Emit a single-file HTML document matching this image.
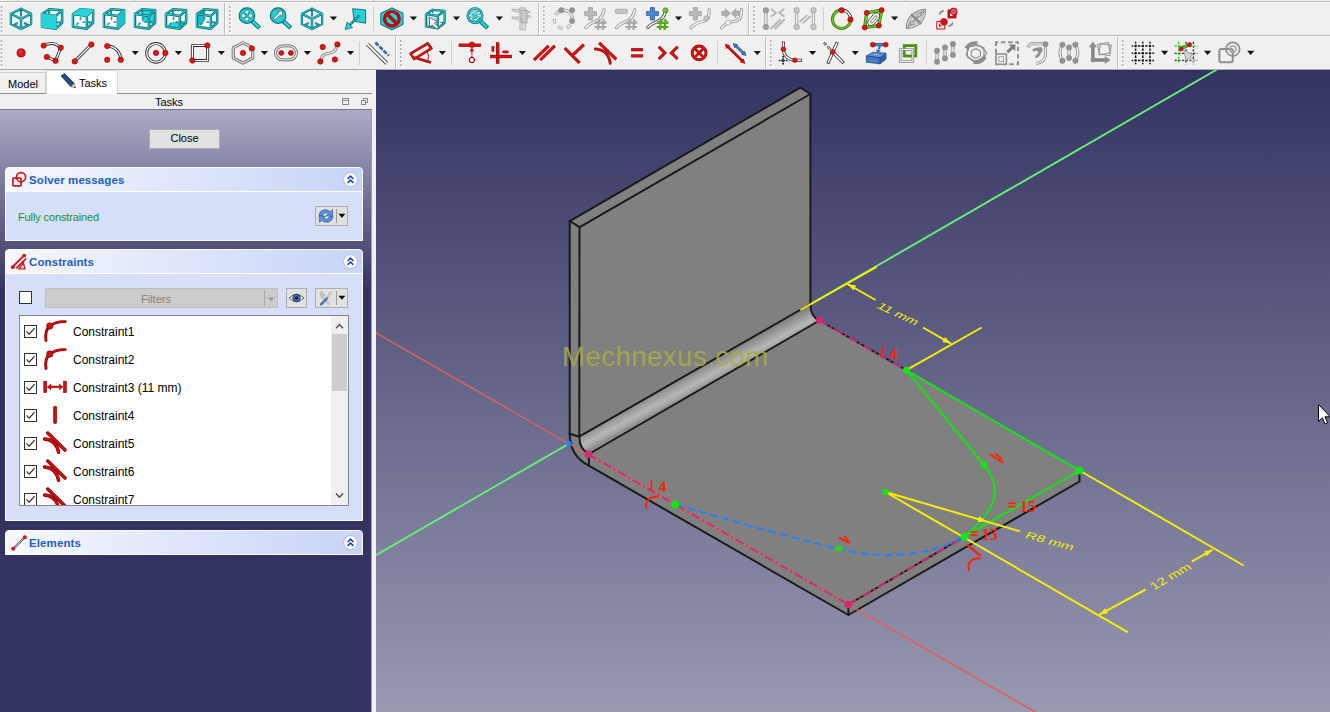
<!DOCTYPE html>
<html lang="en">
<head>
<meta charset="utf-8">
<title>FreeCAD Sketcher</title>
<style>
html,body{margin:0;padding:0;}
body{width:1330px;height:712px;overflow:hidden;background:#f0f0f0;position:relative;font-family:"Liberation Sans","DejaVu Sans",sans-serif;font-size:11px;color:#000;}
.abs{position:absolute;}
#toolbars{left:0;top:0;width:1330px;height:70px;background:#f0f0f0;}
#toolbars svg{position:absolute;left:0;top:0;}
#viewport{left:376px;top:70px;width:954px;height:642px;background:linear-gradient(to bottom,#333362 0%,#9999b2 100%);overflow:hidden;}
#viewport svg{position:absolute;left:-376px;top:-70px;}
#leftdock{left:0;top:70px;width:372px;height:642px;background:#f0f0f0;}
.tab{position:absolute;box-sizing:border-box;border:1px solid #d0d0d0;border-bottom:none;font-size:11px;}
#tabModel{left:-1px;top:2px;width:47px;height:22px;background:#f0f0f0;}
#tabModel span{position:absolute;left:8px;top:5px;}
#tabTasks{left:46px;top:0;width:72px;height:24px;background:#fff;border-color:#d8d8d8;}
#tabTasks span{position:absolute;left:32px;top:6px;}
#tabline{left:117px;top:23px;width:255px;height:1px;background:#919191;}
#tabline2{left:0;top:23px;width:46px;height:1px;background:#919191;}
#docktitle{left:0;top:24px;width:372px;height:15px;text-align:center;line-height:15px;font-size:11px;}
#docktitle span{position:relative;left:-17px;top:1px;}
#panel{left:0;top:39px;width:372px;height:603px;box-sizing:border-box;border-top:1px solid #74748f;border-right:1px solid #9a9ab5;
 background:linear-gradient(to bottom,#ababc5 0px,#333362 182px,#333362 100%);}
#closebtn{left:149px;top:19px;width:71px;height:20px;box-sizing:border-box;background:#e1e1e1;border:1px solid #adadad;text-align:center;line-height:17px;font-size:11px;}
.box{position:absolute;left:5px;width:358px;box-sizing:border-box;border:1px solid #fff;background:#d6dff7;border-radius:4px 4px 0 0;}
.box .hdr{position:absolute;left:0;top:0;right:0;height:23px;border-bottom:1px solid #fff;border-radius:3px 3px 0 0;
 background:linear-gradient(to right,#f8f9fe 0%,#e3e9fb 40%,#c7d4f7 100%);}
.box .hdr b{position:absolute;left:23px;top:6px;font-size:11.5px;color:#215dc6;font-weight:bold;letter-spacing:0.1px;white-space:nowrap;}
.box .hdr svg{position:absolute;}
.chev{position:absolute;right:4px;top:4px;width:15px;height:15px;}
.tbtn{position:absolute;box-sizing:border-box;background:#e1e1e1;border:1px solid #adadad;}
#list{left:13px;top:65px;width:330px;height:191px;box-sizing:border-box;border:1px solid #828790;background:#fff;overflow:hidden;}
.row{position:absolute;left:0;width:310px;height:28px;}
.row .cb{position:absolute;left:4px;top:8px;width:13px;height:13px;box-sizing:border-box;border:1px solid #333;background:#fff;}
.row .cb svg{position:absolute;left:0;top:0;}
.row .ic{position:absolute;left:23px;top:2px;width:24px;height:24px;}
.row span{position:absolute;left:53px;top:8px;font-size:12px;white-space:nowrap;}
#sb{left:311px;top:0;width:17px;height:189px;background:#f0f0f0;}
#sbthumb{left:1px;top:18px;width:15px;height:57px;background:#cdcdcd;}
</style>
</head>
<body>
<!--TOOLBARS-->
<div id="toolbars" class="abs">
<svg width="1330" height="70" viewBox="0 0 1330 70">
<rect x="0" y="0" width="1330" height="70" fill="#f0f0f0"/>
<line x1="0" y1="1.5" x2="1330" y2="1.5" stroke="#b9b9b9"/><line x1="0" y1="2.5" x2="1330" y2="2.5" stroke="#fafafa"/>
<line x1="0" y1="35.5" x2="1330" y2="35.5" stroke="#b9b9b9"/><line x1="0" y1="36.5" x2="1330" y2="36.5" stroke="#fafafa"/>
<line x1="0" y1="69.5" x2="1330" y2="69.5" stroke="#a9a9a9"/>
<line x1="17.5" y1="0" x2="17.5" y2="1.5" stroke="#c4c4c4"/>
<line x1="134.5" y1="0" x2="134.5" y2="1.5" stroke="#c4c4c4"/>
<line x1="373.5" y1="0" x2="373.5" y2="1.5" stroke="#c4c4c4"/>
<line x1="478.5" y1="0" x2="478.5" y2="1.5" stroke="#c4c4c4"/>
<line x1="521.5" y1="0" x2="521.5" y2="1.5" stroke="#c4c4c4"/>
<line x1="905.5" y1="0" x2="905.5" y2="1.5" stroke="#c4c4c4"/>
<line x1="2.4" y1="6.8" x2="2.4" y2="32.8" stroke="#fff" stroke-width="2" stroke-dasharray="2 2"/>
<line x1="1.6" y1="6.0" x2="1.6" y2="32.0" stroke="#b2b2b2" stroke-width="1.6" stroke-dasharray="2 2"/>
<line x1="2.4" y1="40.8" x2="2.4" y2="66.8" stroke="#fff" stroke-width="2" stroke-dasharray="2 2"/>
<line x1="1.6" y1="40.0" x2="1.6" y2="66.0" stroke="#b2b2b2" stroke-width="1.6" stroke-dasharray="2 2"/>
<line x1="224.5" y1="3.0" x2="224.5" y2="35.0" stroke="#bdbdbd" stroke-width="1"/>
<line x1="225.5" y1="3.0" x2="225.5" y2="35.0" stroke="#fdfdfd" stroke-width="1"/>
<line x1="230.7" y1="6.8" x2="230.7" y2="32.8" stroke="#fff" stroke-width="2" stroke-dasharray="2 2"/>
<line x1="229.9" y1="6.0" x2="229.9" y2="32.0" stroke="#b2b2b2" stroke-width="1.6" stroke-dasharray="2 2"/>
<line x1="538.5" y1="3.0" x2="538.5" y2="35.0" stroke="#bdbdbd" stroke-width="1"/>
<line x1="539.5" y1="3.0" x2="539.5" y2="35.0" stroke="#fdfdfd" stroke-width="1"/>
<line x1="544.7" y1="6.8" x2="544.7" y2="32.8" stroke="#fff" stroke-width="2" stroke-dasharray="2 2"/>
<line x1="543.9" y1="6.0" x2="543.9" y2="32.0" stroke="#b2b2b2" stroke-width="1.6" stroke-dasharray="2 2"/>
<line x1="748.5" y1="3.0" x2="748.5" y2="35.0" stroke="#bdbdbd" stroke-width="1"/>
<line x1="749.5" y1="3.0" x2="749.5" y2="35.0" stroke="#fdfdfd" stroke-width="1"/>
<line x1="754.7" y1="6.8" x2="754.7" y2="32.8" stroke="#fff" stroke-width="2" stroke-dasharray="2 2"/>
<line x1="753.9" y1="6.0" x2="753.9" y2="32.0" stroke="#b2b2b2" stroke-width="1.6" stroke-dasharray="2 2"/>
<line x1="395.5" y1="37.0" x2="395.5" y2="69.0" stroke="#bdbdbd" stroke-width="1"/>
<line x1="396.5" y1="37.0" x2="396.5" y2="69.0" stroke="#fdfdfd" stroke-width="1"/>
<line x1="401.7" y1="40.8" x2="401.7" y2="66.8" stroke="#fff" stroke-width="2" stroke-dasharray="2 2"/>
<line x1="400.9" y1="40.0" x2="400.9" y2="66.0" stroke="#b2b2b2" stroke-width="1.6" stroke-dasharray="2 2"/>
<line x1="765.5" y1="37.0" x2="765.5" y2="69.0" stroke="#bdbdbd" stroke-width="1"/>
<line x1="766.5" y1="37.0" x2="766.5" y2="69.0" stroke="#fdfdfd" stroke-width="1"/>
<line x1="771.7" y1="40.8" x2="771.7" y2="66.8" stroke="#fff" stroke-width="2" stroke-dasharray="2 2"/>
<line x1="770.9" y1="40.0" x2="770.9" y2="66.0" stroke="#b2b2b2" stroke-width="1.6" stroke-dasharray="2 2"/>
<line x1="1117.5" y1="37.0" x2="1117.5" y2="69.0" stroke="#bdbdbd" stroke-width="1"/>
<line x1="1118.5" y1="37.0" x2="1118.5" y2="69.0" stroke="#fdfdfd" stroke-width="1"/>
<line x1="1123.7" y1="40.8" x2="1123.7" y2="66.8" stroke="#fff" stroke-width="2" stroke-dasharray="2 2"/>
<line x1="1122.9" y1="40.0" x2="1122.9" y2="66.0" stroke="#b2b2b2" stroke-width="1.6" stroke-dasharray="2 2"/>
<line x1="373.5" y1="7.0" x2="373.5" y2="31.0" stroke="#cfcfcf" stroke-width="1"/>
<line x1="823.5" y1="7.0" x2="823.5" y2="31.0" stroke="#cfcfcf" stroke-width="1"/>
<line x1="359.5" y1="41.0" x2="359.5" y2="65.0" stroke="#cfcfcf" stroke-width="1"/>
<line x1="451.5" y1="41.0" x2="451.5" y2="65.0" stroke="#cfcfcf" stroke-width="1"/>
<line x1="717.5" y1="41.0" x2="717.5" y2="65.0" stroke="#cfcfcf" stroke-width="1"/>
<line x1="926.5" y1="41.0" x2="926.5" y2="65.0" stroke="#cfcfcf" stroke-width="1"/>
<path d="M21.0 8.7 L21.0 15.7 M15.2 24.1 L17.2 23.3" fill="none" stroke="#076a72" stroke-width="2.0" stroke-linejoin="round" stroke-linecap="round"/>
<path d="M21.0 8.7 L21.0 15.7 M15.2 24.1 L17.2 23.3" fill="none" stroke="#27d3d9" stroke-width="0.8" stroke-linejoin="round" stroke-linecap="round"/>
<path d="M26.8 24.1 L24.8 23.3" fill="none" stroke="#076a72" stroke-width="2.0" stroke-linejoin="round" stroke-linecap="round"/>
<path d="M26.8 24.1 L24.8 23.3" fill="none" stroke="#27d3d9" stroke-width="0.8" stroke-linejoin="round" stroke-linecap="round"/>
<path d="M21.0 8.7 L31.1 13.7 L31.1 23.9 L21.0 28.9 L10.9 23.9 L10.9 13.7Z M10.9 13.7 L21.0 18.9 L31.1 13.7 M21.0 18.9 L21.0 28.9" fill="none" stroke="#076a72" stroke-width="2.3" stroke-linejoin="round" stroke-linecap="round"/>
<path d="M21.0 8.7 L31.1 13.7 L31.1 23.9 L21.0 28.9 L10.9 23.9 L10.9 13.7Z M10.9 13.7 L21.0 18.9 L31.1 13.7 M21.0 18.9 L21.0 28.9" fill="none" stroke="#27d3d9" stroke-width="1.0" stroke-linejoin="round" stroke-linecap="round"/>
<path d="M42.0 14.0 L49.2 9.2 L62.1 10.2 L62.1 22.8 L55.9 28.7 L42.0 26.8Z" fill="#fdfdfd"/>
<ellipse cx="49.5" cy="18.5" rx="0.6" ry="1.4" fill="#27d3d9" stroke="#076a72" stroke-width="0.6"/>
<ellipse cx="52.8" cy="22.1" rx="1.3" ry="0.5" fill="#27d3d9" stroke="#076a72" stroke-width="0.6"/>
<ellipse cx="46.3" cy="23.9" rx="1.5" ry="0.6" fill="#27d3d9" stroke="#076a72" stroke-width="0.6" transform="rotate(-35 46.3 23.9)"/>
<path d="M49.2 9.2 L49.2 14.4 M62.1 22.8 L57.0 22.3" fill="none" stroke="#076a72" stroke-width="1.9" stroke-linejoin="round" stroke-linecap="round"/>
<path d="M49.2 9.2 L49.2 14.4 M62.1 22.8 L57.0 22.3" fill="none" stroke="#27d3d9" stroke-width="0.7" stroke-linejoin="round" stroke-linecap="round"/>
<path d="M42.0 14.0 L55.9 15.9 L55.9 28.7 L42.0 26.8Z" fill="#27d3d9"/>
<path d="M42.0 14.0 L55.9 15.9 L55.9 28.7 L42.0 26.8 Z M42.0 14.0 L49.2 9.2 M55.9 15.9 L62.1 10.2 M55.9 28.7 L62.1 22.8 M49.2 9.2 L62.1 10.2 L62.1 22.8" fill="none" stroke="#076a72" stroke-width="2.5" stroke-linejoin="round" stroke-linecap="round"/>
<path d="M42.0 14.0 L55.9 15.9 L55.9 28.7 L42.0 26.8 Z M42.0 14.0 L49.2 9.2 M55.9 15.9 L62.1 10.2 M55.9 28.7 L62.1 22.8 M49.2 9.2 L62.1 10.2 L62.1 22.8" fill="none" stroke="#27d3d9" stroke-width="1.0" stroke-linejoin="round" stroke-linecap="round"/>
<path d="M42.0 14.0 L55.9 15.9 L55.9 28.7 L42.0 26.8Z" fill="#27d3d9" stroke="#27d3d9" stroke-width="1.2" stroke-linejoin="round"/>
<path d="M73.0 14.0 L80.2 9.2 L93.1 10.2 L93.1 22.8 L86.9 28.7 L73.0 26.8Z" fill="#fdfdfd"/>
<ellipse cx="80.5" cy="18.5" rx="0.6" ry="1.4" fill="#27d3d9" stroke="#076a72" stroke-width="0.6"/>
<ellipse cx="83.8" cy="22.1" rx="1.3" ry="0.5" fill="#27d3d9" stroke="#076a72" stroke-width="0.6"/>
<ellipse cx="77.3" cy="23.9" rx="1.5" ry="0.6" fill="#27d3d9" stroke="#076a72" stroke-width="0.6" transform="rotate(-35 77.3 23.9)"/>
<path d="M80.2 9.2 L80.2 14.4 M93.1 22.8 L88.0 22.3" fill="none" stroke="#076a72" stroke-width="1.9" stroke-linejoin="round" stroke-linecap="round"/>
<path d="M80.2 9.2 L80.2 14.4 M93.1 22.8 L88.0 22.3" fill="none" stroke="#27d3d9" stroke-width="0.7" stroke-linejoin="round" stroke-linecap="round"/>
<path d="M73.0 14.0 L80.2 9.2 L93.1 10.2 L86.9 15.9Z" fill="#27d3d9"/>
<path d="M73.0 14.0 L86.9 15.9 L86.9 28.7 L73.0 26.8 Z M73.0 14.0 L80.2 9.2 M86.9 15.9 L93.1 10.2 M86.9 28.7 L93.1 22.8 M80.2 9.2 L93.1 10.2 L93.1 22.8" fill="none" stroke="#076a72" stroke-width="2.5" stroke-linejoin="round" stroke-linecap="round"/>
<path d="M73.0 14.0 L86.9 15.9 L86.9 28.7 L73.0 26.8 Z M73.0 14.0 L80.2 9.2 M86.9 15.9 L93.1 10.2 M86.9 28.7 L93.1 22.8 M80.2 9.2 L93.1 10.2 L93.1 22.8" fill="none" stroke="#27d3d9" stroke-width="1.0" stroke-linejoin="round" stroke-linecap="round"/>
<path d="M73.0 14.0 L80.2 9.2 L93.1 10.2 L86.9 15.9Z" fill="#27d3d9" stroke="#27d3d9" stroke-width="1.2" stroke-linejoin="round"/>
<path d="M104.0 14.0 L111.2 9.2 L124.1 10.2 L124.1 22.8 L117.9 28.7 L104.0 26.8Z" fill="#fdfdfd"/>
<ellipse cx="111.5" cy="18.5" rx="0.6" ry="1.4" fill="#27d3d9" stroke="#076a72" stroke-width="0.6"/>
<ellipse cx="114.8" cy="22.1" rx="1.3" ry="0.5" fill="#27d3d9" stroke="#076a72" stroke-width="0.6"/>
<ellipse cx="108.3" cy="23.9" rx="1.5" ry="0.6" fill="#27d3d9" stroke="#076a72" stroke-width="0.6" transform="rotate(-35 108.3 23.9)"/>
<path d="M111.2 9.2 L111.2 14.4 M124.1 22.8 L119.0 22.3" fill="none" stroke="#076a72" stroke-width="1.9" stroke-linejoin="round" stroke-linecap="round"/>
<path d="M111.2 9.2 L111.2 14.4 M124.1 22.8 L119.0 22.3" fill="none" stroke="#27d3d9" stroke-width="0.7" stroke-linejoin="round" stroke-linecap="round"/>
<path d="M117.9 15.9 L124.1 10.2 L124.1 22.8 L117.9 28.7Z" fill="#1fbfc6"/>
<path d="M104.0 14.0 L117.9 15.9 L117.9 28.7 L104.0 26.8 Z M104.0 14.0 L111.2 9.2 M117.9 15.9 L124.1 10.2 M117.9 28.7 L124.1 22.8 M111.2 9.2 L124.1 10.2 L124.1 22.8" fill="none" stroke="#076a72" stroke-width="2.5" stroke-linejoin="round" stroke-linecap="round"/>
<path d="M104.0 14.0 L117.9 15.9 L117.9 28.7 L104.0 26.8 Z M104.0 14.0 L111.2 9.2 M117.9 15.9 L124.1 10.2 M117.9 28.7 L124.1 22.8 M111.2 9.2 L124.1 10.2 L124.1 22.8" fill="none" stroke="#27d3d9" stroke-width="1.0" stroke-linejoin="round" stroke-linecap="round"/>
<path d="M117.9 15.9 L124.1 10.2 L124.1 22.8 L117.9 28.7Z" fill="#1fbfc6" stroke="#1fbfc6" stroke-width="1.2" stroke-linejoin="round"/>
<path d="M135.0 14.0 L142.2 9.2 L155.1 10.2 L155.1 22.8 L148.9 28.7 L135.0 26.8Z" fill="#fdfdfd"/>
<path d="M142.2 9.2 L155.1 10.2 L155.1 22.8 L142.4 21.8Z" fill="#27d3d9"/>
<ellipse cx="142.5" cy="18.5" rx="0.6" ry="1.4" fill="#27d3d9" stroke="#076a72" stroke-width="0.6"/>
<ellipse cx="145.8" cy="22.1" rx="1.3" ry="0.5" fill="#27d3d9" stroke="#076a72" stroke-width="0.6"/>
<ellipse cx="139.3" cy="23.9" rx="1.5" ry="0.6" fill="#27d3d9" stroke="#076a72" stroke-width="0.6" transform="rotate(-35 139.3 23.9)"/>
<path d="M142.2 9.2 L142.2 14.4 M155.1 22.8 L150.0 22.3" fill="none" stroke="#076a72" stroke-width="1.9" stroke-linejoin="round" stroke-linecap="round"/>
<path d="M142.2 9.2 L142.2 14.4 M155.1 22.8 L150.0 22.3" fill="none" stroke="#27d3d9" stroke-width="0.7" stroke-linejoin="round" stroke-linecap="round"/>
<path d="M135.0 14.0 L148.9 15.9 L148.9 28.7 L135.0 26.8 Z M135.0 14.0 L142.2 9.2 M148.9 15.9 L155.1 10.2 M148.9 28.7 L155.1 22.8 M142.2 9.2 L155.1 10.2 L155.1 22.8" fill="none" stroke="#076a72" stroke-width="2.5" stroke-linejoin="round" stroke-linecap="round"/>
<path d="M135.0 14.0 L148.9 15.9 L148.9 28.7 L135.0 26.8 Z M135.0 14.0 L142.2 9.2 M148.9 15.9 L155.1 10.2 M148.9 28.7 L155.1 22.8 M142.2 9.2 L155.1 10.2 L155.1 22.8" fill="none" stroke="#27d3d9" stroke-width="1.0" stroke-linejoin="round" stroke-linecap="round"/>
<path d="M166.0 14.0 L173.2 9.2 L186.1 10.2 L186.1 22.8 L179.9 28.7 L166.0 26.8Z" fill="#fdfdfd"/>
<path d="M166.0 26.8 L179.9 28.7 L186.1 22.8 L173.4 21.8Z" fill="#27d3d9"/>
<ellipse cx="173.5" cy="18.5" rx="0.6" ry="1.4" fill="#27d3d9" stroke="#076a72" stroke-width="0.6"/>
<ellipse cx="176.8" cy="22.1" rx="1.3" ry="0.5" fill="#27d3d9" stroke="#076a72" stroke-width="0.6"/>
<ellipse cx="170.3" cy="23.9" rx="1.5" ry="0.6" fill="#27d3d9" stroke="#076a72" stroke-width="0.6" transform="rotate(-35 170.3 23.9)"/>
<path d="M173.2 9.2 L173.2 14.4 M186.1 22.8 L181.0 22.3" fill="none" stroke="#076a72" stroke-width="1.9" stroke-linejoin="round" stroke-linecap="round"/>
<path d="M173.2 9.2 L173.2 14.4 M186.1 22.8 L181.0 22.3" fill="none" stroke="#27d3d9" stroke-width="0.7" stroke-linejoin="round" stroke-linecap="round"/>
<path d="M166.0 14.0 L179.9 15.9 L179.9 28.7 L166.0 26.8 Z M166.0 14.0 L173.2 9.2 M179.9 15.9 L186.1 10.2 M179.9 28.7 L186.1 22.8 M173.2 9.2 L186.1 10.2 L186.1 22.8" fill="none" stroke="#076a72" stroke-width="2.5" stroke-linejoin="round" stroke-linecap="round"/>
<path d="M166.0 14.0 L179.9 15.9 L179.9 28.7 L166.0 26.8 Z M166.0 14.0 L173.2 9.2 M179.9 15.9 L186.1 10.2 M179.9 28.7 L186.1 22.8 M173.2 9.2 L186.1 10.2 L186.1 22.8" fill="none" stroke="#27d3d9" stroke-width="1.0" stroke-linejoin="round" stroke-linecap="round"/>
<path d="M197.0 14.0 L204.2 9.2 L217.1 10.2 L217.1 22.8 L210.9 28.7 L197.0 26.8Z" fill="#fdfdfd"/>
<path d="M197.0 14.0 L204.2 9.2 L204.4 21.8 L197.0 26.8Z" fill="#20bcc3"/>
<ellipse cx="204.5" cy="18.5" rx="0.6" ry="1.4" fill="#27d3d9" stroke="#076a72" stroke-width="0.6"/>
<ellipse cx="207.8" cy="22.1" rx="1.3" ry="0.5" fill="#27d3d9" stroke="#076a72" stroke-width="0.6"/>
<ellipse cx="201.3" cy="23.9" rx="1.5" ry="0.6" fill="#27d3d9" stroke="#076a72" stroke-width="0.6" transform="rotate(-35 201.3 23.9)"/>
<path d="M204.2 9.2 L204.2 14.4 M217.1 22.8 L212.0 22.3" fill="none" stroke="#076a72" stroke-width="1.9" stroke-linejoin="round" stroke-linecap="round"/>
<path d="M204.2 9.2 L204.2 14.4 M217.1 22.8 L212.0 22.3" fill="none" stroke="#27d3d9" stroke-width="0.7" stroke-linejoin="round" stroke-linecap="round"/>
<path d="M197.0 14.0 L210.9 15.9 L210.9 28.7 L197.0 26.8 Z M197.0 14.0 L204.2 9.2 M210.9 15.9 L217.1 10.2 M210.9 28.7 L217.1 22.8 M204.2 9.2 L217.1 10.2 L217.1 22.8" fill="none" stroke="#076a72" stroke-width="2.5" stroke-linejoin="round" stroke-linecap="round"/>
<path d="M197.0 14.0 L210.9 15.9 L210.9 28.7 L197.0 26.8 Z M197.0 14.0 L204.2 9.2 M210.9 15.9 L217.1 10.2 M210.9 28.7 L217.1 22.8 M204.2 9.2 L217.1 10.2 L217.1 22.8" fill="none" stroke="#27d3d9" stroke-width="1.0" stroke-linejoin="round" stroke-linecap="round"/>
<path d="M252.3 21.3 L257.9 26.5" stroke="#076a72" stroke-width="4.4" stroke-linecap="square"/>
<path d="M252.3 21.3 L257.9 26.5" stroke="#27d3d9" stroke-width="2.6" stroke-linecap="square"/>
<circle cx="246.9" cy="15.7" r="7.8" fill="#27d3d9" stroke="#076a72" stroke-width="1.1"/>
<circle cx="246.9" cy="15.7" r="6.2" fill="none" stroke="#17b3ba" stroke-width="0.8"/>
<path d="M246.9 9.8 l2.5 3 l-0.9 0 l0 1.3 l1.3 0 l0 -0.9 l3 2.5 l-3 2.5 l0 -0.9 l-1.3 0 l0 1.3 l0.9 0 l-2.5 3 l-2.5 -3 l0.9 0 l0 -1.3 l-1.3 0 l0 0.9 l-3 -2.5 l3 -2.5 l0 0.9 l1.3 0 l0 -1.3 l-0.9 0z" fill="#fff" stroke="#076a72" stroke-width="0.5"/>
<rect x="245.1" y="13.9" width="3.6" height="3.6" fill="#19b9c0" stroke="#076a72" stroke-width="0.4"/>
<path d="M283.5 21.3 L289.1 26.5" stroke="#076a72" stroke-width="4.4" stroke-linecap="square"/>
<path d="M283.5 21.3 L289.1 26.5" stroke="#27d3d9" stroke-width="2.6" stroke-linecap="square"/>
<circle cx="278.1" cy="15.7" r="7.8" fill="#27d3d9" stroke="#076a72" stroke-width="1.1"/>
<circle cx="278.1" cy="15.7" r="6.2" fill="none" stroke="#17b3ba" stroke-width="0.8"/>
<path d="M282.7 10.9 l-5.6 0.8 l1.7 1.5 l-5.4 5 l1.5 1.6 l5.5 -5 l1.6 1.7z" fill="#fff" stroke="#3a3a3a" stroke-width="0.6"/>
<path d="M312.0 8.7 L312.0 15.7 M306.2 24.1 L308.2 23.3" fill="none" stroke="#076a72" stroke-width="2.0" stroke-linejoin="round" stroke-linecap="round"/>
<path d="M312.0 8.7 L312.0 15.7 M306.2 24.1 L308.2 23.3" fill="none" stroke="#27d3d9" stroke-width="0.8" stroke-linejoin="round" stroke-linecap="round"/>
<path d="M317.8 24.1 L315.8 23.3" fill="none" stroke="#076a72" stroke-width="2.0" stroke-linejoin="round" stroke-linecap="round"/>
<path d="M317.8 24.1 L315.8 23.3" fill="none" stroke="#27d3d9" stroke-width="0.8" stroke-linejoin="round" stroke-linecap="round"/>
<path d="M312.0 8.7 L322.1 13.7 L322.1 23.9 L312.0 28.9 L301.9 23.9 L301.9 13.7Z M301.9 13.7 L312.0 18.9 L322.1 13.7 M312.0 18.9 L312.0 28.9" fill="none" stroke="#076a72" stroke-width="2.3" stroke-linejoin="round" stroke-linecap="round"/>
<path d="M312.0 8.7 L322.1 13.7 L322.1 23.9 L312.0 28.9 L301.9 23.9 L301.9 13.7Z M301.9 13.7 L312.0 18.9 L322.1 13.7 M312.0 18.9 L312.0 28.9" fill="none" stroke="#27d3d9" stroke-width="1.0" stroke-linejoin="round" stroke-linecap="round"/>
<path d="M329.9 16.5 L337.1 16.5 L333.5 20.6Z" fill="#111"/>
<path d="M352.6 8.7 L365.6 9.9 L365.6 23.2 L354.2 21.2Z" fill="#27d3d9" stroke="#076a72" stroke-width="0.9"/>
<path d="M359.4 15.4 L349.6 25.2" stroke="#076a72" stroke-width="2.6"/><path d="M359.4 15.4 L349.6 25.2" stroke="#27d3d9" stroke-width="1.2" stroke-dasharray="2.2 1.2"/>
<path d="M345.2 29.4 L347.2 22.2 L352.6 27.6Z" fill="#27d3d9" stroke="#076a72" stroke-width="0.8"/>
<path d="M391.9 7.8 L403 13.2 L403 24.4 L391.9 29.9 L380.8 24.4 L380.8 13.2Z" fill="#27d3d9" stroke="#076a72" stroke-width="1"/>
<circle cx="391.9" cy="18.8" r="7.3" fill="none" stroke="#7a0000" stroke-width="3.2"/><path d="M386.6 13.6 L397.2 24" stroke="#7a0000" stroke-width="3.2"/>
<circle cx="391.9" cy="18.8" r="7.3" fill="none" stroke="#d40000" stroke-width="2.2"/><path d="M386.6 13.6 L397.2 24" stroke="#d40000" stroke-width="2.2"/>
<path d="M409.9 16.5 L417.1 16.5 L413.5 20.6Z" fill="#111"/>
<path d="M426 14.2 L437.8 15.8 L437.8 28.4 L426 26.4Z" fill="#c4e8f2"/><path d="M426 14.2 L432.8 9.8 L444.6 10.8 L437.8 15.8Z" fill="#f8f8f8"/><path d="M437.8 15.8 L444.6 10.8 L444.6 22.8 L437.8 28.4Z" fill="#f8f8f8"/>
<path d="M432.8 9.8 L432.8 13.4 M444.6 22.8 L440.4 22.4" stroke="#0e7f86" stroke-width="1.2"/>
<path d="M426 14.2 L437.8 15.8 L437.8 28.4 L426 26.4Z M426 14.2 L432.8 9.8 L444.6 10.8 L437.8 15.8 M444.6 10.8 L444.6 22.8 L437.8 28.4" fill="none" stroke="#076a72" stroke-width="2.3" stroke-linejoin="round" stroke-linecap="round"/>
<path d="M426 14.2 L437.8 15.8 L437.8 28.4 L426 26.4Z M426 14.2 L432.8 9.8 L444.6 10.8 L437.8 15.8 M444.6 10.8 L444.6 22.8 L437.8 28.4" fill="none" stroke="#27d3d9" stroke-width="0.9" stroke-linejoin="round" stroke-linecap="round"/>
<path d="M429.4 17.2 L429.6 27.4 L432.2 25 L436.6 29 L438.6 27 L434.4 23.2 L437.4 21.6Z" fill="#f6f6f6" stroke="#4a4a4a" stroke-width="0.8" stroke-linejoin="round"/>
<path d="M452.9 16.5 L460.1 16.5 L456.5 20.6Z" fill="#111"/>
<path d="M480.4 21.3 L486.0 26.5" stroke="#076a72" stroke-width="4.4" stroke-linecap="square"/>
<path d="M480.4 21.3 L486.0 26.5" stroke="#27d3d9" stroke-width="2.6" stroke-linecap="square"/>
<circle cx="475.0" cy="15.7" r="7.2" fill="#fbfbfb" stroke="#076a72" stroke-width="2.6"/>
<circle cx="475.0" cy="15.7" r="7.2" fill="none" stroke="#27d3d9" stroke-width="1.3"/>
<ellipse cx="475.0" cy="15.7" rx="3.4" ry="2.2" fill="#25cfd5"/>
<path d="M470.8 15.1 A4 3.6 0 0 1 477.6 12.9" fill="none" stroke="#076a72" stroke-width="2.4"/>
<path d="M470.8 15.1 A4 3.6 0 0 1 477.6 12.9" fill="none" stroke="#e8fbfb" stroke-width="1.2"/>
<path d="M476.4 11.9 l3.6 -1 l-0.2 4.2z" fill="#e8fbfb" stroke="#076a72" stroke-width="0.6"/>
<path d="M479.2 16.3 A4 3.6 0 0 1 472.4 18.5" fill="none" stroke="#076a72" stroke-width="2.4"/>
<path d="M479.2 16.3 A4 3.6 0 0 1 472.4 18.5" fill="none" stroke="#e8fbfb" stroke-width="1.2"/>
<path d="M473.6 19.5 l-3.6 1 l0.2 -4.2z" fill="#e8fbfb" stroke="#076a72" stroke-width="0.6"/>
<path d="M495.8 16.5 L503.0 16.5 L499.4 20.6Z" fill="#111"/>
<g stroke="#a6a6a6" stroke-width="0.7" stroke-linejoin="round"><rect x="519.8" y="7.8" width="5.8" height="22" fill="#dedede"/><path d="M511.9 9.3 L519.8 9.3 L519.8 12.2 L516 11.8 L511.9 10.5Z" fill="#d4d4d4"/><path d="M511.9 17 L521 17 L521 20.2 L516 19.5 L511.9 18.3Z" fill="#d4d4d4"/><rect x="521.2" y="10.2" width="5.9" height="12.8" fill="#c4c4c4" stroke="#9e9e9e"/><path d="M525.6 11 L530.2 11.7 L530.2 12.7 L525.6 13.2Z" fill="#d0d0d0"/><path d="M527.1 15.2 L530.2 15.9 L530.2 16.9 L527.1 17.5Z" fill="#d0d0d0"/></g>
<path d="M520.6 20 L523 20 M520.6 22 L522.4 22 M520.6 24 L523 24 M520.6 26 L522.4 26 M520.6 28 L523 28" stroke="#b0b0b0" stroke-width="0.7"/><path d="M522.4 12 L525.8 12 M522.4 14 L525.8 14 M522.4 16 L525.8 16 M522.4 18 L525.8 18" stroke="#dcdcdc" stroke-width="0.7"/>
<circle cx="563.4" cy="19.4" r="9" fill="none" stroke="#a6a6a6" stroke-width="3.2" stroke-dasharray="4.6 4.4" stroke-dashoffset="-6"/><circle cx="563.4" cy="19.4" r="9" fill="none" stroke="#f4f4f4" stroke-width="1.6" stroke-dasharray="3.4 5.6" stroke-dashoffset="-6.6"/>
<path d="M561.3 10.3 A9.3 9.3 0 0 1 572.4 21.1" fill="none" stroke="#a0a0a0" stroke-width="3.0" stroke-linecap="butt" stroke-linejoin="round"/>
<path d="M561.3 10.3 A9.3 9.3 0 0 1 572.4 21.1" fill="none" stroke="#f4f4f4" stroke-width="1.4" stroke-linecap="butt" stroke-linejoin="round"/>
<circle cx="561.3" cy="10.3" r="2.7" fill="#939393" stroke="#858585" stroke-width="0.5"/>
<circle cx="572.1" cy="10.3" r="2.7" fill="#939393" stroke="#858585" stroke-width="0.5"/>
<circle cx="572.1" cy="21.1" r="2.7" fill="#939393" stroke="#858585" stroke-width="0.5"/>
<path d="M585.9 27.6 C591.4 20 600.9 24.4 604.1 9.8" fill="none" stroke="#8c8c8c" stroke-width="3.1" stroke-linecap="round" stroke-linejoin="round"/>
<path d="M585.9 27.6 C591.4 20 600.9 24.4 604.1 9.8" fill="none" stroke="#f8f8f8" stroke-width="1.6" stroke-linecap="round" stroke-linejoin="round"/>
<path d="M588.5 7.6 h4 v4 h4 v4 h-4 v4.4 h-4 v-4.4 h-4 v-4 h4z" fill="#b8b8b8" stroke="#a0a0a0" stroke-width="0.8"/>
<path d="M599.0 19.2 L598.0 30.0 M603.6 19.2 L602.6 30.0 M595.0 22.6 L606.4 22.6 M594.8 27.0 L606.2 27.0" stroke="#9e9e9e" stroke-width="2.1"/><path d="M599.0 19.2 L598.0 30.0 M603.6 19.2 L602.6 30.0 M595.0 22.6 L606.4 22.6 M594.8 27.0 L606.2 27.0" stroke="#b0b0b0" stroke-width="1.0"/>
<path d="M616.6 27.6 C622.1 20 631.6 24.4 634.8 9.8" fill="none" stroke="#8c8c8c" stroke-width="3.1" stroke-linecap="round" stroke-linejoin="round"/>
<path d="M616.6 27.6 C622.1 20 631.6 24.4 634.8 9.8" fill="none" stroke="#f8f8f8" stroke-width="1.6" stroke-linecap="round" stroke-linejoin="round"/>
<rect x="615.4" y="9.2" width="12" height="4.2" rx="0.8" fill="#c6c6c6" stroke="#a8a8a8" stroke-width="0.8"/>
<path d="M629.8 19.2 L628.8 30.0 M634.4 19.2 L633.4 30.0 M625.8 22.6 L637.2 22.6 M625.6 27.0 L637.0 27.0" stroke="#9e9e9e" stroke-width="2.1"/><path d="M629.8 19.2 L628.8 30.0 M634.4 19.2 L633.4 30.0 M625.8 22.6 L637.2 22.6 M625.6 27.0 L637.0 27.0" stroke="#b0b0b0" stroke-width="1.0"/>
<path d="M647.8 27.6 C653.3 20 662.8 24.4 666.0 9.8" fill="none" stroke="#3a3a3a" stroke-width="3.1" stroke-linecap="round" stroke-linejoin="round"/>
<path d="M647.8 27.6 C653.3 20 662.8 24.4 666.0 9.8" fill="none" stroke="#f8f8f8" stroke-width="1.6" stroke-linecap="round" stroke-linejoin="round"/>
<path d="M650.4 7.6 h4 v4 h4 v4 h-4 v4.4 h-4 v-4.4 h-4 v-4 h4z" fill="#4a86cf" stroke="#2c5c9c" stroke-width="0.8"/>
<path d="M661.0 19.2 L660.0 30.0 M665.6 19.2 L664.6 30.0 M657.0 22.6 L668.4 22.6 M656.8 27.0 L668.2 27.0" stroke="#3f7f10" stroke-width="2.1"/><path d="M661.0 19.2 L660.0 30.0 M665.6 19.2 L664.6 30.0 M657.0 22.6 L668.4 22.6 M656.8 27.0 L668.2 27.0" stroke="#6cc21c" stroke-width="1.0"/>
<circle cx="665.5" cy="10.3" r="2.6" fill="#6cc21c" stroke="#3f7f10" stroke-width="0.6"/>
<path d="M674.9 16.5 L682.1 16.5 L678.5 20.6Z" fill="#111"/>
<path d="M691 28 C696 19.6 706.6 24 708.6 17 L709.2 9.8" fill="none" stroke="#8c8c8c" stroke-width="3.0" stroke-linecap="round" stroke-linejoin="round"/>
<path d="M691 28 C696 19.6 706.6 24 708.6 17 L709.2 9.8" fill="none" stroke="#f8f8f8" stroke-width="1.5" stroke-linecap="round" stroke-linejoin="round"/>
<path d="M693.4 7.6 h4 v4 h4 v4 h-4 v4.4 h-4 v-4.4 h-4 v-4 h4z" fill="#b8b8b8" stroke="#a0a0a0" stroke-width="0.8"/>
<circle cx="706.2" cy="18.2" r="2.5" fill="#c4c4c4" stroke="#858585" stroke-width="0.5"/>
<path d="M721.6 28 C727 19 738.6 24 740.8 16.6 L741.4 9.6" fill="none" stroke="#8c8c8c" stroke-width="3.0" stroke-linecap="round" stroke-linejoin="round"/>
<path d="M721.6 28 C727 19 738.6 24 740.8 16.6 L741.4 9.6" fill="none" stroke="#f8f8f8" stroke-width="1.5" stroke-linecap="round" stroke-linejoin="round"/>
<path d="M721.8 11.1 h3.6 v-2.5 l5 4.7 l-5 4.7 v-2.5 h-3.6z M739.6 11.1 h-3.6 v-2.5 l-5 4.7 l5 4.7 v-2.5 h3.6z" fill="#aeaeae" stroke="#9a9a9a" stroke-width="0.5"/>
<circle cx="728.0" cy="22.6" r="2.5" fill="#f4f4f4" stroke="#858585" stroke-width="0.5"/>
<path d="M765.9 10.3 L765.9 27.0" fill="none" stroke="#9a9a9a" stroke-width="3.2" stroke-linecap="butt" stroke-linejoin="round"/>
<path d="M765.9 10.3 L765.9 27.0" fill="none" stroke="#f2f2f2" stroke-width="1.5" stroke-linecap="butt" stroke-linejoin="round"/>
<circle cx="765.9" cy="10.3" r="2.8" fill="#a0a0a0" stroke="#858585" stroke-width="0.5"/>
<circle cx="765.9" cy="27.0" r="2.8" fill="#a0a0a0" stroke="#858585" stroke-width="0.5"/>
<path d="M771 8.8 L776 12.8 L771 16.8 M784.4 8.8 L779.4 12.8 L784.4 16.8" fill="none" stroke="#b6b6b6" stroke-width="1.8"/>
<path d="M770.4 29 L780.8 19.2 M774.6 29 L784.8 19.2" stroke="#b6b6b6" stroke-width="2.2"/>
<path d="M796.6 10.3 L796.6 27.0" fill="none" stroke="#a2a2a2" stroke-width="3.2" stroke-linecap="butt" stroke-linejoin="round"/>
<path d="M796.6 10.3 L796.6 27.0" fill="none" stroke="#f2f2f2" stroke-width="1.5" stroke-linecap="butt" stroke-linejoin="round"/>
<circle cx="796.6" cy="10.3" r="2.8" fill="#c6c6c6" stroke="#858585" stroke-width="0.5"/>
<circle cx="796.6" cy="27.0" r="2.8" fill="#c6c6c6" stroke="#858585" stroke-width="0.5"/>
<path d="M813.4 10.3 L813.4 27.0" fill="none" stroke="#a2a2a2" stroke-width="3.2" stroke-linecap="butt" stroke-linejoin="round"/>
<path d="M813.4 10.3 L813.4 27.0" fill="none" stroke="#f2f2f2" stroke-width="1.5" stroke-linecap="butt" stroke-linejoin="round"/>
<circle cx="813.4" cy="10.3" r="2.8" fill="#c6c6c6" stroke="#858585" stroke-width="0.5"/>
<circle cx="813.4" cy="27.0" r="2.8" fill="#c6c6c6" stroke="#858585" stroke-width="0.5"/>
<path d="M799.4 22.2 L807.2 14.8 M802.8 23.4 L810.6 16" stroke="#b6b6b6" stroke-width="1.8"/>
<circle cx="841.6" cy="19.2" r="9.2" fill="none" stroke="#2f6a0c" stroke-width="2.9"/><circle cx="841.6" cy="19.2" r="9.2" fill="none" stroke="#6cc81e" stroke-width="1.6"/>
<path d="M841.6 10 A9.2 9.2 0 0 1 850.8 19.4" fill="none" stroke="#3a3a3a" stroke-width="2.9" stroke-linecap="butt" stroke-linejoin="round"/>
<path d="M841.6 10 A9.2 9.2 0 0 1 850.8 19.4" fill="none" stroke="#fafafa" stroke-width="1.6" stroke-linecap="butt" stroke-linejoin="round"/>
<circle cx="841.6" cy="10.3" r="2.7" fill="#e01414" stroke="#8c0000" stroke-width="0.6"/>
<circle cx="850.4" cy="19.5" r="2.7" fill="#e01414" stroke="#8c0000" stroke-width="0.6"/>
<path d="M866.7 12.8 L881.6 10.1 L878.9 25.6 L864.7 27.5Z" fill="none" stroke="#2f6a0c" stroke-width="3.2" stroke-linejoin="round"/><path d="M866.7 12.8 L881.6 10.1 L878.9 25.6 L864.7 27.5Z" fill="none" stroke="#6cc81e" stroke-width="1.9" stroke-linejoin="round"/>
<path d="M868 21 L873.6 14.2 Q877.8 11 879.6 15 L879 18.4 L873.8 24.6 Q869.4 27 867.8 23.6Z" fill="#fff" stroke="#333" stroke-width="0.9"/><path d="M870.6 21.4 L875.4 15.8 Q877.2 15 877 17.2 L872.6 22.6 Q870.6 23.6 870.6 21.4Z" fill="#fff" stroke="#333" stroke-width="0.7"/>
<circle cx="866.7" cy="12.8" r="2.5" fill="#e01414" stroke="#8c0000" stroke-width="0.6"/>
<circle cx="881.6" cy="10.1" r="2.5" fill="#e01414" stroke="#8c0000" stroke-width="0.6"/>
<circle cx="878.9" cy="25.6" r="2.5" fill="#e01414" stroke="#8c0000" stroke-width="0.6"/>
<circle cx="864.7" cy="27.5" r="2.5" fill="#e01414" stroke="#8c0000" stroke-width="0.6"/>
<path d="M891.0 16.5 L898.2 16.5 L894.6 20.6Z" fill="#111"/>
<path d="M906.4 28.4 C906 17.6 914 10 925.6 9.4 C926.2 20.4 918 28.2 906.4 28.4Z" fill="#e6e6e6" stroke="#8c8c8c" stroke-width="1.1"/><path d="M909 25.8 C909.2 18.4 915.2 12.6 923 12 C923 19.8 916.8 25.4 909 25.8Z" fill="none" stroke="#9a9a9a" stroke-width="0.9"/>
<path d="M907 27.8 L925 10" stroke="#8c8c8c" stroke-width="2.6"/><path d="M907 27.8 L925 10" stroke="#e0e0e0" stroke-width="0.9"/><path d="M911 14.2 L921.2 24" stroke="#8c8c8c" stroke-width="2.6"/><rect x="917" y="13" width="3.4" height="3.4" fill="#c4c4c4" stroke="#8c8c8c" stroke-width="0.6"/><rect x="910.6" y="21.4" width="3.4" height="3.4" fill="#c4c4c4" stroke="#8c8c8c" stroke-width="0.6"/>
<rect x="948" y="10" width="8" height="8" fill="#d40f1f" stroke="#a00010" stroke-width="0.8"/><circle cx="953.6" cy="11.6" r="3.6" fill="#e42a3a" stroke="#a00010" stroke-width="0.7"/><circle cx="953.6" cy="11.6" r="1.8" fill="none" stroke="#ffd0d0" stroke-width="0.5"/><path d="M950 16 l0 -3 l3 3z" fill="#fff"/>
<rect x="936.8" y="21.4" width="8" height="7.6" fill="#fbe4e6" stroke="#d40f1f" stroke-width="1"/><circle cx="944" cy="21.8" r="3.4" fill="#d40f1f" stroke="#a00010" stroke-width="0.6"/><path d="M939 26.6 l0 -3.2 l3.2 3.2z" fill="#d40f1f"/>
<path d="M939.6 14.6 Q939.8 11.4 943 11 M952.6 22.4 Q952.4 25.6 949.2 26" fill="none" stroke="#8a8a8a" stroke-width="1.5"/><path d="M942.4 9.6 l2 1.6 l-2.2 1.2z M949.8 24.4 l-2 1.6 l2.2 1.2z" fill="#8a8a8a"/>
<circle cx="21.1" cy="52.9" r="4.1" fill="#e01414" stroke="#8c0000" stroke-width="0.7"/><circle cx="20.2" cy="51.8" r="1.8" fill="#f04a4a" opacity="0.55"/>
<path d="M43.7 45.6 Q53 40.4 60.8 47.7 L55.6 60.8 L46.8 56.9" fill="none" stroke="#2a2a2a" stroke-width="3.0" stroke-linecap="butt" stroke-linejoin="round"/>
<path d="M43.7 45.6 Q53 40.4 60.8 47.7 L55.6 60.8 L46.8 56.9" fill="none" stroke="#fff" stroke-width="1.3" stroke-linecap="butt" stroke-linejoin="round"/>
<circle cx="43.7" cy="45.6" r="2.7" fill="#e01414" stroke="#8c0000" stroke-width="0.6"/>
<circle cx="60.8" cy="47.7" r="2.7" fill="#e01414" stroke="#8c0000" stroke-width="0.6"/>
<circle cx="55.6" cy="60.8" r="2.7" fill="#e01414" stroke="#8c0000" stroke-width="0.6"/>
<circle cx="46.8" cy="56.9" r="2.7" fill="#e01414" stroke="#8c0000" stroke-width="0.6"/>
<path d="M74.7 61.4 L91.4 44.5" fill="none" stroke="#2a2a2a" stroke-width="3.0" stroke-linecap="butt" stroke-linejoin="round"/>
<path d="M74.7 61.4 L91.4 44.5" fill="none" stroke="#fff" stroke-width="1.3" stroke-linecap="butt" stroke-linejoin="round"/>
<circle cx="74.7" cy="61.4" r="2.7" fill="#e01414" stroke="#8c0000" stroke-width="0.6"/>
<circle cx="91.4" cy="44.5" r="2.7" fill="#e01414" stroke="#8c0000" stroke-width="0.6"/>
<path d="M107.2 46.1 A13.6 13.7 0 0 1 120.8 59.8" fill="none" stroke="#2a2a2a" stroke-width="3.0" stroke-linecap="butt" stroke-linejoin="round"/>
<path d="M107.2 46.1 A13.6 13.7 0 0 1 120.8 59.8" fill="none" stroke="#fff" stroke-width="1.3" stroke-linecap="butt" stroke-linejoin="round"/>
<circle cx="107.2" cy="46.1" r="2.7" fill="#e01414" stroke="#8c0000" stroke-width="0.6"/>
<circle cx="107.2" cy="59.8" r="2.7" fill="#e01414" stroke="#8c0000" stroke-width="0.6"/>
<circle cx="120.8" cy="59.8" r="2.7" fill="#e01414" stroke="#8c0000" stroke-width="0.6"/>
<path d="M131.7 50.9 L138.9 50.9 L135.3 55.0Z" fill="#111"/>
<circle cx="156" cy="52.9" r="9.3" fill="none" stroke="#2a2a2a" stroke-width="3"/><circle cx="156" cy="52.9" r="9.3" fill="none" stroke="#fff" stroke-width="1.3"/>
<circle cx="156.0" cy="52.9" r="2.7" fill="#e01414" stroke="#8c0000" stroke-width="0.6"/>
<circle cx="165.4" cy="52.9" r="2.7" fill="#e01414" stroke="#8c0000" stroke-width="0.6"/>
<path d="M174.8 50.9 L182.0 50.9 L178.4 55.0Z" fill="#111"/>
<path d="M192.4 45.4 L207.6 45.4 L207.6 60.6 L192.4 60.6Z" fill="none" stroke="#2a2a2a" stroke-width="3.0" stroke-linecap="butt" stroke-linejoin="round"/>
<path d="M192.4 45.4 L207.6 45.4 L207.6 60.6 L192.4 60.6Z" fill="none" stroke="#fff" stroke-width="1.3" stroke-linecap="butt" stroke-linejoin="round"/>
<circle cx="207.4" cy="45.4" r="2.7" fill="#e01414" stroke="#8c0000" stroke-width="0.6"/>
<circle cx="192.4" cy="60.5" r="2.7" fill="#e01414" stroke="#8c0000" stroke-width="0.6"/>
<path d="M217.8 50.9 L225.0 50.9 L221.4 55.0Z" fill="#111"/>
<path d="M243 42.7 L252.8 47.8 L252.8 58 L243 63.1 L233.2 58 L233.2 47.8Z" fill="none" stroke="#555" stroke-width="2.9" stroke-linecap="butt" stroke-linejoin="round"/>
<path d="M243 42.7 L252.8 47.8 L252.8 58 L243 63.1 L233.2 58 L233.2 47.8Z" fill="none" stroke="#e6e6e6" stroke-width="1.4" stroke-linecap="butt" stroke-linejoin="round"/>
<circle cx="243.0" cy="52.9" r="2.7" fill="#e01414" stroke="#8c0000" stroke-width="0.6"/>
<circle cx="251.8" cy="48.4" r="2.7" fill="#e01414" stroke="#8c0000" stroke-width="0.6"/>
<path d="M260.8 50.9 L268.0 50.9 L264.4 55.0Z" fill="#111"/>
<path d="M282.6 45.9 L289.4 45.9 A7 7 0 0 1 289.4 59.9 L282.6 59.9 A7 7 0 0 1 282.6 45.9Z" fill="none" stroke="#555" stroke-width="2.9" stroke-linecap="butt" stroke-linejoin="round"/>
<path d="M282.6 45.9 L289.4 45.9 A7 7 0 0 1 289.4 59.9 L282.6 59.9 A7 7 0 0 1 282.6 45.9Z" fill="none" stroke="#eee" stroke-width="1.4" stroke-linecap="butt" stroke-linejoin="round"/>
<circle cx="281.3" cy="52.9" r="2.5" fill="#e01414" stroke="#8c0000" stroke-width="0.6"/>
<circle cx="290.9" cy="52.9" r="2.5" fill="#e01414" stroke="#8c0000" stroke-width="0.6"/>
<path d="M303.8 50.9 L311.0 50.9 L307.4 55.0Z" fill="#111"/>
<path d="M320.4 61.5 C323.4 47 334 60 337.4 44.4" fill="none" stroke="#7a7a7a" stroke-width="3.0" stroke-linecap="butt" stroke-linejoin="round"/>
<path d="M320.4 61.5 C323.4 47 334 60 337.4 44.4" fill="none" stroke="#f0f0f0" stroke-width="1.4" stroke-linecap="butt" stroke-linejoin="round"/>
<circle cx="320.4" cy="61.5" r="2.7" fill="#e01414" stroke="#8c0000" stroke-width="0.6"/>
<circle cx="337.4" cy="44.4" r="2.7" fill="#e01414" stroke="#8c0000" stroke-width="0.6"/>
<circle cx="322.7" cy="47.0" r="2.7" fill="#e01414" stroke="#8c0000" stroke-width="0.6"/>
<circle cx="334.9" cy="59.5" r="2.7" fill="#e01414" stroke="#8c0000" stroke-width="0.6"/>
<path d="M346.9 50.9 L354.1 50.9 L350.5 55.0Z" fill="#111"/>
<path d="M367.4 44.2 L386.8 63.4" fill="none" stroke="#444" stroke-width="3.7" stroke-linecap="butt" stroke-linejoin="round"/>
<path d="M367.4 44.2 L386.8 63.4" fill="none" stroke="#fff" stroke-width="1.9" stroke-linecap="butt" stroke-linejoin="round"/>
<path d="M375.4 42.5 L388.6 55.6" stroke="#27508c" stroke-width="2.6" stroke-dasharray="4.2 1.6"/><path d="M375.4 42.5 L388.6 55.6" stroke="#4a7fc4" stroke-width="1.2" stroke-dasharray="4.2 1.6"/>
<g fill="none" stroke="#8c0000" stroke-width="2.6" stroke-linejoin="round"><path d="M410.6 53.6 L427.8 43.4 L431.4 48.4 L414.2 59Z"/><path d="M414.4 57.6 L430.8 62.4"/></g>
<g fill="none" stroke="#e01414" stroke-width="1.5" stroke-linejoin="round"><path d="M410.6 53.6 L427.8 43.4 L431.4 48.4 L414.2 59Z"/><path d="M414.4 57.6 L430.8 62.4"/></g>
<path d="M412.6 55 L425.4 47.4" stroke="#fff" stroke-width="0.8"/><path d="M427.4 52 Q429.6 56 427.8 61" fill="none" stroke="#b00000" stroke-width="0.9"/>
<path d="M438.8 50.9 L446.0 50.9 L442.4 55.0Z" fill="#111"/>
<path d="M458.8 45.2 L480.9 45.2" fill="none" stroke="#8c0000" stroke-width="3.3" stroke-linecap="butt" stroke-linejoin="round"/>
<path d="M458.8 45.2 L480.9 45.2" fill="none" stroke="#e01414" stroke-width="2.1" stroke-linecap="butt" stroke-linejoin="round"/>
<circle cx="471.9" cy="44.7" r="2.8" fill="#e01414" stroke="#8c0000" stroke-width="0.6"/>
<path d="M471.9 57 L471.9 50" stroke="#c00000" stroke-width="1.4" stroke-dasharray="1.6 1.2"/><path d="M469.6 51.4 L471.9 47.6 L474.2 51.4Z" fill="#c00000"/>
<circle cx="471.9" cy="60" r="2.5" fill="#fff" stroke="#c00000" stroke-width="1.2"/>
<path d="M497.7 42.3 L497.7 63.7" fill="none" stroke="#8c0000" stroke-width="3.3" stroke-linecap="butt" stroke-linejoin="round"/>
<path d="M497.7 42.3 L497.7 63.7" fill="none" stroke="#e01414" stroke-width="2.1" stroke-linecap="butt" stroke-linejoin="round"/>
<path d="M490.1 56.5 L511.9 56.5" fill="none" stroke="#8c0000" stroke-width="3.3" stroke-linecap="butt" stroke-linejoin="round"/>
<path d="M490.1 56.5 L511.9 56.5" fill="none" stroke="#e01414" stroke-width="2.1" stroke-linecap="butt" stroke-linejoin="round"/>
<path d="M492.9 46 L492.9 51.6" fill="none" stroke="#8c0000" stroke-width="2.7" stroke-linecap="butt" stroke-linejoin="round"/>
<path d="M492.9 46 L492.9 51.6" fill="none" stroke="#e01414" stroke-width="1.5" stroke-linecap="butt" stroke-linejoin="round"/>
<path d="M502.6 51.9 L508.4 51.9" fill="none" stroke="#8c0000" stroke-width="2.7" stroke-linecap="butt" stroke-linejoin="round"/>
<path d="M502.6 51.9 L508.4 51.9" fill="none" stroke="#e01414" stroke-width="1.5" stroke-linecap="butt" stroke-linejoin="round"/>
<path d="M518.8 50.9 L526.0 50.9 L522.4 55.0Z" fill="#111"/>
<path d="M534 60 L548.6 45.8" fill="none" stroke="#8c0000" stroke-width="3.1" stroke-linecap="butt" stroke-linejoin="round"/>
<path d="M534 60 L548.6 45.8" fill="none" stroke="#e01414" stroke-width="1.9" stroke-linecap="butt" stroke-linejoin="round"/>
<path d="M540.2 60 L554.8 45.8" fill="none" stroke="#8c0000" stroke-width="3.1" stroke-linecap="butt" stroke-linejoin="round"/>
<path d="M540.2 60 L554.8 45.8" fill="none" stroke="#e01414" stroke-width="1.9" stroke-linecap="butt" stroke-linejoin="round"/>
<path d="M564.7 48 L579.5 62.9" fill="none" stroke="#8c0000" stroke-width="3.1" stroke-linecap="butt" stroke-linejoin="round"/>
<path d="M564.7 48 L579.5 62.9" fill="none" stroke="#e01414" stroke-width="1.9" stroke-linecap="butt" stroke-linejoin="round"/>
<path d="M572.4 55.4 L583.9 44.7" fill="none" stroke="#8c0000" stroke-width="3.1" stroke-linecap="butt" stroke-linejoin="round"/>
<path d="M572.4 55.4 L583.9 44.7" fill="none" stroke="#e01414" stroke-width="1.9" stroke-linecap="butt" stroke-linejoin="round"/>
<path d="M595.4 49 C603 49.4 609 54 610.2 63.2" fill="none" stroke="#8c0000" stroke-width="2.9" stroke-linecap="round" stroke-linejoin="round"/>
<path d="M595.4 49 C603 49.4 609 54 610.2 63.2" fill="none" stroke="#e01414" stroke-width="1.7" stroke-linecap="round" stroke-linejoin="round"/>
<path d="M599.2 42.8 L616.3 59.4" fill="none" stroke="#8c0000" stroke-width="3.1" stroke-linecap="butt" stroke-linejoin="round"/>
<path d="M599.2 42.8 L616.3 59.4" fill="none" stroke="#e01414" stroke-width="1.9" stroke-linecap="butt" stroke-linejoin="round"/>
<path d="M631.1 49.7 L642.9 49.7" fill="none" stroke="#8c0000" stroke-width="3.1" stroke-linecap="butt" stroke-linejoin="round"/>
<path d="M631.1 49.7 L642.9 49.7" fill="none" stroke="#e01414" stroke-width="1.9" stroke-linecap="butt" stroke-linejoin="round"/>
<path d="M631.1 55.9 L642.9 55.9" fill="none" stroke="#8c0000" stroke-width="3.1" stroke-linecap="butt" stroke-linejoin="round"/>
<path d="M631.1 55.9 L642.9 55.9" fill="none" stroke="#e01414" stroke-width="1.9" stroke-linecap="butt" stroke-linejoin="round"/>
<path d="M658.8 46.8 L664.9 52.9 L658.8 59" fill="none" stroke="#8c0000" stroke-width="3.0" stroke-linecap="butt" stroke-linejoin="miter"/>
<path d="M658.8 46.8 L664.9 52.9 L658.8 59" fill="none" stroke="#e01414" stroke-width="1.8" stroke-linecap="butt" stroke-linejoin="miter"/>
<path d="M677.6 46.8 L671.5 52.9 L677.6 59" fill="none" stroke="#8c0000" stroke-width="3.0" stroke-linecap="butt" stroke-linejoin="miter"/>
<path d="M677.6 46.8 L671.5 52.9 L677.6 59" fill="none" stroke="#e01414" stroke-width="1.8" stroke-linecap="butt" stroke-linejoin="miter"/>
<circle cx="699.1" cy="52.9" r="6.9" fill="none" stroke="#8c0000" stroke-width="2.9"/><path d="M694.4 48.2 L703.8 57.6 M703.8 48.2 L694.4 57.6" stroke="#8c0000" stroke-width="2.7"/>
<circle cx="699.1" cy="52.9" r="6.9" fill="none" stroke="#e01414" stroke-width="1.7"/><path d="M694.4 48.2 L703.8 57.6 M703.8 48.2 L694.4 57.6" stroke="#e01414" stroke-width="1.5"/>
<path d="M727.4 46.4 L742.6 61.2" stroke="#8c0000" stroke-width="2.7"/><path d="M727.4 46.4 L742.6 61.2" stroke="#e01414" stroke-width="1.5"/><path d="M725.3 44.3 L729.6 45.5 L726.5 48.6Z M744.7 63.3 L740.4 62.1 L743.5 59Z" fill="#e01414" stroke="#8c0000" stroke-width="0.7"/>
<path d="M735.4 45.6 L743.8 53.4" stroke="#1f4a86" stroke-width="2.7"/><path d="M735.4 45.6 L743.8 53.4" stroke="#4a82cc" stroke-width="1.5"/><path d="M733.3 43.5 L737.6 44.7 L734.5 47.8Z M745.9 55.5 L741.6 54.3 L744.7 51.2Z" fill="#4a82cc" stroke="#1f4a86" stroke-width="0.7"/>
<path d="M753.7 50.9 L760.9 50.9 L757.3 55.0Z" fill="#111"/>
<path d="M783.4 43 L783.4 49.2 A11.4 11 0 0 0 794.9 60.2 L800.6 60.2" fill="none" stroke="#2a2a2a" stroke-width="3.0" stroke-linecap="square" stroke-linejoin="round"/>
<path d="M783.4 43 L783.4 49.2 A11.4 11 0 0 0 794.9 60.2 L800.6 60.2" fill="none" stroke="#fff" stroke-width="1.4" stroke-linecap="square" stroke-linejoin="round"/>
<circle cx="783.4" cy="49.2" r="2.3" fill="#e01414" stroke="#8c0000" stroke-width="0.6"/>
<circle cx="794.9" cy="60.2" r="2.3" fill="#e01414" stroke="#8c0000" stroke-width="0.6"/>
<path d="M783.1 55.8 L783.1 64.6 M778.8 60.5 L787.4 60.5" stroke="#111" stroke-width="1.6" stroke-dasharray="1.6 0.8"/>
<path d="M809.0 50.9 L816.2 50.9 L812.6 55.0Z" fill="#111"/>
<path d="M836.6 43.6 L828.4 62.2" fill="none" stroke="#2a2a2a" stroke-width="3.2" stroke-linecap="square" stroke-linejoin="round"/>
<path d="M836.6 43.6 L828.4 62.2" fill="none" stroke="#fff" stroke-width="1.6" stroke-linecap="square" stroke-linejoin="round"/>
<path d="M832.7 51.9 L842.6 62" fill="none" stroke="#2a2a2a" stroke-width="3.2" stroke-linecap="square" stroke-linejoin="round"/>
<path d="M832.7 51.9 L842.6 62" fill="none" stroke="#fff" stroke-width="1.6" stroke-linecap="square" stroke-linejoin="round"/>
<ellipse cx="825" cy="43.8" rx="1.5" ry="1" transform="rotate(45 825 43.8)" fill="#e8e8e8" stroke="#2a2a2a" stroke-width="0.8"/><ellipse cx="829" cy="48" rx="2" ry="1.1" transform="rotate(45 829 48)" fill="#e8e8e8" stroke="#2a2a2a" stroke-width="0.8"/>
<circle cx="832.7" cy="51.9" r="2.4" fill="#e01414" stroke="#8c0000" stroke-width="0.6"/>
<path d="M851.7 50.9 L858.9 50.9 L855.3 55.0Z" fill="#111"/>
<path d="M866.4 56 L872.9 52.2 L886 53.2 L880.1 57.9Z" fill="#5b8fd6" stroke="#1f4a86" stroke-width="0.8"/><path d="M866.4 56 L880.1 57.9 L880.1 63.8 L866.4 62.2Z" fill="#3d76c2" stroke="#1f4a86" stroke-width="0.8"/><path d="M880.1 57.9 L886 53.2 L886 59.2 L880.1 63.8Z" fill="#2f62a8" stroke="#1f4a86" stroke-width="0.8"/>
<path d="M869 60.6 L878 61.6" stroke="#6fa0e2" stroke-width="1" stroke-dasharray="1 0.8"/><path d="M874 54.6 L879 55" stroke="#cfe0f6" stroke-width="0.8" stroke-dasharray="1 0.8"/>
<path d="M872.7 44.7 L885.8 44.7" stroke="#1f4a86" stroke-width="3.2"/><path d="M872.7 44.7 L885.8 44.7" stroke="#4a82cc" stroke-width="1.8"/><path d="M880 46.4 L878.6 49.4" stroke="#2f66b0" stroke-width="2"/><path d="M875.8 49.2 L881 50.4 L877.6 52.8Z" fill="#2f66b0"/>
<circle cx="872.7" cy="44.7" r="2.4" fill="#e01414" stroke="#8c0000" stroke-width="0.6"/>
<circle cx="885.8" cy="44.7" r="2.4" fill="#e01414" stroke="#8c0000" stroke-width="0.6"/>
<rect x="904.2" y="45.6" width="11.6" height="10.4" fill="none" stroke="#4a9608" stroke-width="2.8"/>
<rect x="900.2" y="49.6" width="12.6" height="12" fill="none" stroke="#8a8a8a" stroke-width="2.6"/><rect x="900.2" y="49.6" width="12.6" height="12" fill="none" stroke="#f4f4f4" stroke-width="1"/>
<path d="M937.0 50.8 L937.0 61.8" fill="none" stroke="#8e8e8e" stroke-width="3.2" stroke-linecap="butt" stroke-linejoin="round"/>
<path d="M937.0 50.8 L937.0 61.8" fill="none" stroke="#f2f2f2" stroke-width="1.5" stroke-linecap="butt" stroke-linejoin="round"/>
<circle cx="937.0" cy="50.8" r="2.7" fill="#939393" stroke="#858585" stroke-width="0.5"/>
<circle cx="937.0" cy="61.8" r="2.7" fill="#939393" stroke="#858585" stroke-width="0.5"/>
<path d="M945.0 47.4 L945.0 58.4" fill="none" stroke="#8e8e8e" stroke-width="3.2" stroke-linecap="butt" stroke-linejoin="round"/>
<path d="M945.0 47.4 L945.0 58.4" fill="none" stroke="#f2f2f2" stroke-width="1.5" stroke-linecap="butt" stroke-linejoin="round"/>
<circle cx="945.0" cy="47.4" r="2.7" fill="#939393" stroke="#858585" stroke-width="0.5"/>
<circle cx="945.0" cy="58.4" r="2.7" fill="#939393" stroke="#858585" stroke-width="0.5"/>
<path d="M952.9 44.0 L952.9 55.0" fill="none" stroke="#8e8e8e" stroke-width="3.2" stroke-linecap="butt" stroke-linejoin="round"/>
<path d="M952.9 44.0 L952.9 55.0" fill="none" stroke="#f2f2f2" stroke-width="1.5" stroke-linecap="butt" stroke-linejoin="round"/>
<circle cx="952.9" cy="44.0" r="2.7" fill="#939393" stroke="#858585" stroke-width="0.5"/>
<circle cx="952.9" cy="55.0" r="2.7" fill="#939393" stroke="#858585" stroke-width="0.5"/>
<g fill="none" stroke="#909090" stroke-width="1.2"><path d="M975.6 44 L984 48 L984 57 L975.6 61.4 L967.4 57 L967.4 48Z"/><path d="M979.6 45.6 L986.8 52.4 L982.6 61 L973.4 61.6 L966.2 55 L969.6 46.4Z"/><path d="M975.8 48.6 L980.4 51 L980.4 56 L975.8 58.4 L971.2 56 L971.2 51Z"/></g>
<path d="M964.6 47.4 Q969.4 39.6 978 41.6 L976.6 45.2 Q971 44.4 968.2 49.6Z M986.6 57.8 Q982 65.6 973.2 63.8 L974.6 60.2 Q980.4 61 983.2 55.6Z" fill="#8e8e8e"/>
<rect x="996" y="42.2" width="22" height="22" fill="none" stroke="#929292" stroke-width="2" stroke-dasharray="4.6 2.6" stroke-dashoffset="2.3"/><rect x="996" y="54" width="10.4" height="10.2" fill="#f4f4f4" stroke="#929292" stroke-width="1.6"/><rect x="998.8" y="56.8" width="4.8" height="4.8" fill="none" stroke="#9c9c9c" stroke-width="1"/>
<path d="M1007.4 52.2 L1012.2 47.6" stroke="#7e7e7e" stroke-width="3"/><path d="M1008.6 44.6 L1015.4 44.4 L1015.2 51.2Z" fill="#7e7e7e"/>
<g fill="none" stroke="#8e8e8e"><path d="M1027.6 47.6 L1031 43.8 L1045.4 43.8 L1045.4 55 Q1045 62.4 1036.4 63.4" stroke-width="3"/><path d="M1027.6 47.6 L1031 43.8 L1045.4 43.8 L1045.4 55 Q1045 62.4 1036.4 63.4" stroke="#f4f4f4" stroke-width="1.3"/><path d="M1033 50.6 Q1036 48.2 1039.6 49.8 Q1040.4 55.6 1035.4 57" stroke-width="2.8"/></g>
<circle cx="1045.6" cy="44.1" r="2.6" fill="#939393" stroke="#858585" stroke-width="0.5"/>
<circle cx="1039.8" cy="49.8" r="2.6" fill="#939393" stroke="#858585" stroke-width="0.5"/>
<path d="M1062.4 44.7 Q1057.6 52.7 1062.4 60.7" fill="none" stroke="#8e8e8e" stroke-width="3.2" stroke-linecap="butt" stroke-linejoin="round"/>
<path d="M1062.4 44.7 Q1057.6 52.7 1062.4 60.7" fill="none" stroke="#f2f2f2" stroke-width="1.5" stroke-linecap="butt" stroke-linejoin="round"/>
<circle cx="1062.4" cy="44.7" r="2.7" fill="#939393" stroke="#858585" stroke-width="0.5"/>
<circle cx="1062.4" cy="60.7" r="2.7" fill="#939393" stroke="#858585" stroke-width="0.5"/>
<path d="M1075.4 44.7 Q1080.2 52.7 1075.4 60.7" fill="none" stroke="#8e8e8e" stroke-width="3.2" stroke-linecap="butt" stroke-linejoin="round"/>
<path d="M1075.4 44.7 Q1080.2 52.7 1075.4 60.7" fill="none" stroke="#f2f2f2" stroke-width="1.5" stroke-linecap="butt" stroke-linejoin="round"/>
<circle cx="1075.4" cy="44.7" r="2.7" fill="#939393" stroke="#858585" stroke-width="0.5"/>
<circle cx="1075.4" cy="60.7" r="2.7" fill="#939393" stroke="#858585" stroke-width="0.5"/>
<path d="M1069.0 47.4 L1069.0 58.0" fill="none" stroke="#8e8e8e" stroke-width="3.2" stroke-linecap="butt" stroke-linejoin="round"/>
<path d="M1069.0 47.4 L1069.0 58.0" fill="none" stroke="#f2f2f2" stroke-width="1.5" stroke-linecap="butt" stroke-linejoin="round"/>
<circle cx="1069.0" cy="47.4" r="2.7" fill="#939393" stroke="#858585" stroke-width="0.5"/>
<circle cx="1069.0" cy="58.0" r="2.7" fill="#939393" stroke="#858585" stroke-width="0.5"/>
<path d="M1092.9 46 L1092.9 60 L1106 60" fill="none" stroke="#828282" stroke-width="3.4"/><path d="M1088.8 47.2 L1092.9 41.6 L1097 47.2Z M1104.8 55.9 L1110.6 60 L1104.8 64.1Z" fill="#8e8e8e"/><circle cx="1092.9" cy="60" r="2.4" fill="#8e8e8e"/>
<g fill="none" stroke="#959595" stroke-width="1.1"><rect x="1098.4" y="43.4" width="11" height="10.4" transform="rotate(-12 1104 48.6)"/><rect x="1099.6" y="44.4" width="11" height="10.4" transform="rotate(8 1105 49.6)"/></g>
<line x1="1135.6" y1="41.8" x2="1135.6" y2="64.3" stroke="#111" stroke-width="1.5" stroke-dasharray="2.4 1.2" stroke-dashoffset="0.6"/>
<line x1="1142.8" y1="41.8" x2="1142.8" y2="64.3" stroke="#111" stroke-width="1.5" stroke-dasharray="2.4 1.2" stroke-dashoffset="0.6"/>
<line x1="1150.0" y1="41.8" x2="1150.0" y2="64.3" stroke="#111" stroke-width="1.5" stroke-dasharray="2.4 1.2" stroke-dashoffset="0.6"/>
<line x1="1131.7" y1="46.0" x2="1154.1" y2="46.0" stroke="#111" stroke-width="1.5" stroke-dasharray="2.4 1.2" stroke-dashoffset="0.9"/>
<line x1="1131.7" y1="53.2" x2="1154.1" y2="53.2" stroke="#111" stroke-width="1.5" stroke-dasharray="2.4 1.2" stroke-dashoffset="0.9"/>
<line x1="1131.7" y1="60.4" x2="1154.1" y2="60.4" stroke="#111" stroke-width="1.5" stroke-dasharray="2.4 1.2" stroke-dashoffset="0.9"/>
<path d="M1161.0 50.8 L1168.2 50.8 L1164.6 54.9Z" fill="#111"/>
<line x1="1178.6" y1="41.8" x2="1178.6" y2="64.3" stroke="#1ee01e" stroke-width="1.3" stroke-dasharray="2.2 1.5"/>
<line x1="1186.0" y1="41.8" x2="1186.0" y2="64.3" stroke="#333" stroke-width="1.3" stroke-dasharray="2.2 1.5"/>
<line x1="1193.4" y1="41.8" x2="1193.4" y2="64.3" stroke="#333" stroke-width="1.3" stroke-dasharray="2.2 1.5"/>
<line x1="1174.6" y1="46.0" x2="1197.4" y2="46.0" stroke="#1ee01e" stroke-width="1.3" stroke-dasharray="2.2 1.5"/>
<line x1="1174.6" y1="53.3" x2="1197.4" y2="53.3" stroke="#333" stroke-width="1.3" stroke-dasharray="2.2 1.5"/>
<line x1="1174.6" y1="60.4" x2="1197.4" y2="60.4" stroke="#333" stroke-width="1.3" stroke-dasharray="2.2 1.5"/>
<path d="M1181 48.9 L1189.5 44.7" stroke="#2f6a0c" stroke-width="3"/><path d="M1181 48.9 L1189.5 44.7" stroke="#6cc81e" stroke-width="1.7"/>
<circle cx="1181.0" cy="48.9" r="2.1" fill="#e01414" stroke="#8c0000" stroke-width="0.6"/>
<circle cx="1189.5" cy="44.7" r="2.1" fill="#e01414" stroke="#8c0000" stroke-width="0.6"/>
<path d="M1183.6 50.4 L1186.4 60.6 L1188.6 58 L1193.2 62.6 L1195 60.8 L1190.4 56.4 L1193.2 54.6Z" fill="#d2d2d2" stroke="#8e8e8e" stroke-width="0.7"/>
<path d="M1204.0 50.8 L1211.2 50.8 L1207.6 54.9Z" fill="#111"/>
<rect x="1219.4" y="48.9" width="13.4" height="13.4" rx="2" fill="none" stroke="#8e8e8e" stroke-width="2"/><circle cx="1232.8" cy="49.2" r="6.8" fill="none" stroke="#8e8e8e" stroke-width="1.7"/><circle cx="1232.8" cy="49.2" r="3.2" fill="none" stroke="#a8a8a8" stroke-width="1.6"/>
<path d="M1247.1 50.8 L1254.3 50.8 L1250.7 54.9Z" fill="#111"/>
</svg>
</div>
<!--LEFT-->
<div id="leftdock" class="abs">
 <div id="tabModel" class="tab"><span>Model</span></div>
 <div id="tabTasks" class="tab"><svg class="abs" style="left:12px;top:2px" width="18" height="18" viewBox="0 0 18 18"><path d="M2 3 L5.6 0.6 L15.2 10.4 L11.8 13.6 Z" fill="#254a7c" stroke="#1b3558" stroke-width="0.8"/><path d="M11.8 13.6 L15.2 10.4 L16.6 14.8 Z" fill="#e8e0d0" stroke="#555" stroke-width="0.6"/><path d="M15.6 13.4 L16.6 14.8 L15 14.4Z" fill="#222"/></svg><span>Tasks</span></div>
 <div id="tabline2" class="abs"></div><div id="tabline" class="abs"></div>
 <div id="docktitle" class="abs"><span>Tasks</span>
  <svg class="abs" style="left:341px;top:3px" width="30" height="10" viewBox="0 0 30 10"><rect x="1.5" y="1.5" width="6" height="6" fill="none" stroke="#888" stroke-width="1"/><line x1="1.5" y1="3.5" x2="7.5" y2="3.5" stroke="#888"/><rect x="22.5" y="1.5" width="4" height="4" fill="none" stroke="#888"/><rect x="20.5" y="3.5" width="4" height="4" fill="#f0f0f0" stroke="#888"/></svg>
 </div>
 <div id="panel" class="abs">
  <div id="closebtn" class="abs">Close</div>
  <!-- Solver messages -->
  <div class="box" style="top:57px;height:74px;">
   <div class="hdr"><svg style="left:5px;top:3px" width="17" height="17" viewBox="0 0 17 17"><circle cx="10" cy="6.2" r="4.6" fill="none" stroke="#cc1a1a" stroke-width="1.7"/><rect x="1.9" y="7.2" width="8.2" height="7.6" rx="0.8" fill="none" stroke="#cc1a1a" stroke-width="1.7"/></svg><b>Solver messages</b>
    <svg class="chev" viewBox="0 0 15 15"><circle cx="7.5" cy="7.5" r="7" fill="#fff" stroke="#b4bad2" stroke-width="1"/><path d="M4.6 7 L7.5 4.2 L10.4 7 M4.6 10.8 L7.5 8 L10.4 10.8" fill="none" stroke="#1a3fb0" stroke-width="1.6"/></svg></div>
   <div class="abs" style="left:12px;top:43px;color:#1e8c2c;font-size:11px;letter-spacing:-0.12px;white-space:nowrap;">Fully constrained</div>
   <div class="tbtn" style="left:309px;top:38px;width:33px;height:20px;">
    <svg class="abs" style="left:0;top:0" width="31" height="18" viewBox="0 0 31 18"><path d="M3 8.4 A6.4 6 0 0 1 14.2 4.8 L16.4 2.6 L16.8 9.2 L10.2 8.8 L12.4 6.8 A3.6 3.4 0 0 0 6.4 8.6 Z" fill="#5c93d8" stroke="#2b5a9a" stroke-width="0.7"/><path d="M17 9.6 A6.4 6 0 0 1 5.8 13.2 L3.6 15.4 L3.2 8.8 L9.8 9.2 L7.6 11.2 A3.6 3.4 0 0 0 13.6 9.4 Z" fill="#5c93d8" stroke="#2b5a9a" stroke-width="0.7"/><line x1="20.5" y1="2" x2="20.5" y2="16" stroke="#9a9a9a"/><path d="M22.4 6.8 L29.4 6.8 L25.9 10.8 Z" fill="#000"/></svg>
   </div>
  </div>
  <!-- Constraints -->
  <div class="box" style="top:139px;height:272px;">
   <div class="hdr"><svg style="left:4px;top:3px" width="18" height="18" viewBox="0 0 18 18"><path d="M2.5 14 L13.8 2.6 M6.2 15.4 L16 5.6" stroke="#cc1a1a" stroke-width="1.9" fill="none"/><circle cx="2.8" cy="14.2" r="1.9" fill="#cc1a1a"/><circle cx="14.2" cy="2.6" r="1.9" fill="#cc1a1a"/><path d="M9 15.8 L15 15.8 L13.4 10 Z" fill="none" stroke="#cc1a1a" stroke-width="1.3"/></svg><b>Constraints</b>
    <svg class="chev" viewBox="0 0 15 15"><circle cx="7.5" cy="7.5" r="7" fill="#fff" stroke="#b4bad2" stroke-width="1"/><path d="M4.6 7 L7.5 4.2 L10.4 7 M4.6 10.8 L7.5 8 L10.4 10.8" fill="none" stroke="#1a3fb0" stroke-width="1.6"/></svg></div>
   <div class="abs" style="left:13px;top:41px;width:13px;height:13px;box-sizing:border-box;border:1px solid #333;background:#fff;"></div>
   <div class="abs" style="left:39px;top:38px;width:233px;height:20px;box-sizing:border-box;background:#cccccc;border:1px solid #bfbfbf;color:#838383;font-size:11px;line-height:20px;">
     <span class="abs" style="left:95px;top:0;">Filters</span>
     <svg class="abs" style="left:216px;top:1px" width="16" height="16" viewBox="0 0 16 16"><line x1="2.5" y1="0" x2="2.5" y2="16" stroke="#a8a8a8"/><path d="M5.8 7.4 L12.6 7.4 L9.2 11 Z" fill="#9a9a9a"/></svg>
   </div>
   <div class="tbtn" style="left:280px;top:38px;width:21px;height:20px;"><svg class="abs" style="left:1px;top:1px" width="17" height="16" viewBox="0 0 17 16"><path d="M1 8 Q8.5 0.6 16 8 Q8.5 15.4 1 8Z" fill="#f4f4f8" stroke="#555" stroke-width="0.9"/><circle cx="8.5" cy="8" r="3.8" fill="#4a6fb0" stroke="#1c2f5c" stroke-width="0.8"/><circle cx="8.5" cy="8" r="1.7" fill="#10183a"/></svg></div>
   <div class="tbtn" style="left:309px;top:38px;width:33px;height:20px;">
    <svg class="abs" style="left:0;top:0" width="31" height="18" viewBox="0 0 31 18"><path d="M4.4 4.6 Q4 2.4 6.6 2.8 L5.8 4.4 L7 5.6 L8.6 4.8 Q8.8 7.2 6.8 7 L13.6 14.4 L12.4 15.6 L5.6 8.2 Q4.8 6.6 4.4 4.6Z" fill="#c4c8ce" stroke="#9ea4ac" stroke-width="0.6"/><path d="M15.4 2.6 L13.6 4 L10.6 8 L11.8 9 L14.8 5 Z" fill="#d0d4da" stroke="#9aa0a8" stroke-width="0.5"/><path d="M10.8 8.4 L4.6 14.6 Q3.4 16 5 16.4 L6 15.8 L12 9.4Z" fill="#3f78c8" stroke="#2b5a9a" stroke-width="0.6"/><line x1="20.5" y1="2" x2="20.5" y2="16" stroke="#9a9a9a"/><path d="M22.4 6.8 L29.4 6.8 L25.9 10.8 Z" fill="#000"/></svg>
   </div>
   <div id="list" class="abs">
    <div class="row" style="top:1px"><div class="cb"><svg width="11" height="11" viewBox="0 0 11 11"><path d="M1.6 5.4 L4.2 8.2 L9.6 2.2" fill="none" stroke="#222" stroke-width="1.1"/></svg></div><svg class="ic" viewBox="0 0 24 24"><path d="M3 21.4 C1.2 10 6.5 2.6 22.2 2.6" fill="none" stroke="#7a0000" stroke-width="2.9" stroke-linecap="round"/><path d="M3 21.4 C1.2 10 6.5 2.6 22.2 2.6" fill="none" stroke="#cc0f0f" stroke-width="1.7" stroke-linecap="round"/><circle cx="6.8" cy="7" r="3.2" fill="#cc0f0f" stroke="#7a0000" stroke-width="0.6"/></svg><span>Constraint1</span></div>
<div class="row" style="top:29px"><div class="cb"><svg width="11" height="11" viewBox="0 0 11 11"><path d="M1.6 5.4 L4.2 8.2 L9.6 2.2" fill="none" stroke="#222" stroke-width="1.1"/></svg></div><svg class="ic" viewBox="0 0 24 24"><path d="M3 21.4 C1.2 10 6.5 2.6 22.2 2.6" fill="none" stroke="#7a0000" stroke-width="2.9" stroke-linecap="round"/><path d="M3 21.4 C1.2 10 6.5 2.6 22.2 2.6" fill="none" stroke="#cc0f0f" stroke-width="1.7" stroke-linecap="round"/><circle cx="6.8" cy="7" r="3.2" fill="#cc0f0f" stroke="#7a0000" stroke-width="0.6"/></svg><span>Constraint2</span></div>
<div class="row" style="top:57px"><div class="cb"><svg width="11" height="11" viewBox="0 0 11 11"><path d="M1.6 5.4 L4.2 8.2 L9.6 2.2" fill="none" stroke="#222" stroke-width="1.1"/></svg></div><svg class="ic" viewBox="0 0 24 24"><rect x="0.8" y="6.2" width="2.8" height="11.4" fill="#cc0f0f" stroke="#7a0000" stroke-width="0.6"/><rect x="20.6" y="6.2" width="2.8" height="11.4" fill="#cc0f0f" stroke="#7a0000" stroke-width="0.6"/><path d="M4 11.9 L8 9 L8 11 L16.2 11 L16.2 9 L20.2 11.9 L16.2 14.8 L16.2 12.8 L8 12.8 L8 14.8Z" fill="#cc0f0f" stroke="#7a0000" stroke-width="0.4"/></svg><span>Constraint3 (11 mm)</span></div>
<div class="row" style="top:85px"><div class="cb"><svg width="11" height="11" viewBox="0 0 11 11"><path d="M1.6 5.4 L4.2 8.2 L9.6 2.2" fill="none" stroke="#222" stroke-width="1.1"/></svg></div><svg class="ic" viewBox="0 0 24 24"><rect x="10.6" y="3.4" width="3" height="17" rx="0.8" fill="#cc0f0f" stroke="#7a0000" stroke-width="0.7"/></svg><span>Constraint4</span></div>
<div class="row" style="top:113px"><div class="cb"><svg width="11" height="11" viewBox="0 0 11 11"><path d="M1.6 5.4 L4.2 8.2 L9.6 2.2" fill="none" stroke="#222" stroke-width="1.1"/></svg></div><svg class="ic" viewBox="0 0 24 24"><g fill="none" stroke-linecap="round"><path d="M1.6 8 C9 8.6 14 13 15.6 21.4" stroke="#7a0000" stroke-width="3.4"/><path d="M4.8 2 L22 19" stroke="#7a0000" stroke-width="3.4"/><path d="M1.6 8 C9 8.6 14 13 15.6 21.4" stroke="#cc0f0f" stroke-width="2.2"/><path d="M4.8 2 L22 19" stroke="#cc0f0f" stroke-width="2.2"/></g></svg><span>Constraint5</span></div>
<div class="row" style="top:141px"><div class="cb"><svg width="11" height="11" viewBox="0 0 11 11"><path d="M1.6 5.4 L4.2 8.2 L9.6 2.2" fill="none" stroke="#222" stroke-width="1.1"/></svg></div><svg class="ic" viewBox="0 0 24 24"><g fill="none" stroke-linecap="round"><path d="M1.6 8 C9 8.6 14 13 15.6 21.4" stroke="#7a0000" stroke-width="3.4"/><path d="M4.8 2 L22 19" stroke="#7a0000" stroke-width="3.4"/><path d="M1.6 8 C9 8.6 14 13 15.6 21.4" stroke="#cc0f0f" stroke-width="2.2"/><path d="M4.8 2 L22 19" stroke="#cc0f0f" stroke-width="2.2"/></g></svg><span>Constraint6</span></div>
<div class="row" style="top:169px"><div class="cb"><svg width="11" height="11" viewBox="0 0 11 11"><path d="M1.6 5.4 L4.2 8.2 L9.6 2.2" fill="none" stroke="#222" stroke-width="1.1"/></svg></div><svg class="ic" viewBox="0 0 24 24"><g fill="none" stroke-linecap="round"><path d="M1.6 8 C9 8.6 14 13 15.6 21.4" stroke="#7a0000" stroke-width="3.4"/><path d="M4.8 2 L22 19" stroke="#7a0000" stroke-width="3.4"/><path d="M1.6 8 C9 8.6 14 13 15.6 21.4" stroke="#cc0f0f" stroke-width="2.2"/><path d="M4.8 2 L22 19" stroke="#cc0f0f" stroke-width="2.2"/></g></svg><span>Constraint7</span></div>
    <div id="sb" class="abs"><div id="sbthumb" class="abs"></div>
     <svg class="abs" style="left:0;top:0" width="17" height="189" viewBox="0 0 17 189"><path d="M5 12.2 L8.5 8.6 L12 12.2" fill="none" stroke="#505050" stroke-width="1.5"/><path d="M5 177.6 L8.5 181.2 L12 177.6" fill="none" stroke="#505050" stroke-width="1.5"/></svg>
    </div>
   </div>
  </div>
  <!-- Elements -->
  <div class="box" style="top:420px;height:25px;">
   <div class="hdr" style="border-bottom:none;height:23px;"><svg style="left:4px;top:3px" width="18" height="18" viewBox="0 0 18 18"><path d="M3.2 14.8 L14.8 3.2" stroke="#555" stroke-width="2.2"/><path d="M3.2 14.8 L14.8 3.2" stroke="#e8e8e8" stroke-width="0.8"/><circle cx="3.2" cy="14.8" r="2" fill="#cc1a1a"/><circle cx="14.8" cy="3.2" r="2" fill="#cc1a1a"/></svg><b>Elements</b>
    <svg class="chev" viewBox="0 0 15 15"><circle cx="7.5" cy="7.5" r="7" fill="#fff" stroke="#b4bad2" stroke-width="1"/><path d="M4.6 7 L7.5 4.2 L10.4 7 M4.6 10.8 L7.5 8 L10.4 10.8" fill="none" stroke="#1a3fb0" stroke-width="1.6"/></svg></div>
  </div>
 </div>
</div>
<!--VIEWPORT-->
<div id="viewport" class="abs">
<svg width="1330" height="712" viewBox="0 0 1330 712">
<defs>
<linearGradient id="bendg" gradientUnits="userSpaceOnUse" x1="695" y1="370.5" x2="704" y2="387">
<stop offset="0" stop-color="#858585"/><stop offset="0.35" stop-color="#a2a2a2"/><stop offset="0.62" stop-color="#b6b6b6"/><stop offset="0.85" stop-color="#a4a4a4"/><stop offset="1" stop-color="#8e8e8e"/>
</linearGradient>
</defs>
<!-- axis lines behind the part -->
<line x1="376" y1="332.9" x2="1036" y2="712.3" stroke="#e0605c" stroke-width="1.4"/>
<line x1="376" y1="555.1" x2="1217" y2="69.5" stroke="#66f078" stroke-width="1.9"/>
<!-- plate silhouette -->
<path d="M569.8 221.1 L800.3 87.7 L810.4 94 L810.4 304 C810.4 312.5 813 318 819.5 320.5 L906.3 370.2 L1079.5 470.5 L1079.5 481.5 L848.4 615 L588.9 465.7 C576 459 569.7 448 569.7 433.7 Z" fill="#808080"/>
<!-- bend highlight -->
<path d="M810.4 304 L579.2 436.7 C579.3 445 582 450.5 588.9 454 L819.5 320.5 C813 318 810.4 312.5 810.4 304Z" fill="url(#bendg)"/>
<!-- edges -->
<g fill="none" stroke="#1a1a1a" stroke-width="2" stroke-linejoin="round" stroke-linecap="round">
<path d="M569.8 221.1 L800.3 87.7 L810.4 94 L579.7 227.2 Z"/>
<path d="M810.4 94 L810.4 304 C810.4 312.5 813 318 819.5 320.5"/>
<path d="M569.7 221.1 L569.7 433.7 C569.7 448 576 459 588.9 465.7 L848.4 615 L1079.5 481.5 L1079.5 470.5"/>
<path d="M579.5 227.2 L579.3 436.5 C579.3 445 582 450.5 588.9 454 L588.9 465.7"/>
<path d="M569.7 433.7 L579.2 436.7 L810.4 304"/>
<path d="M588.9 454 L819.5 320.5 L906.3 370.2"/>
<path d="M848.4 604.5 L848.4 615"/>
<path d="M848.4 604.5 L964.2 536.7"/>
</g>
<!-- red axis over top face (visible through sketch) -->
<line x1="569.5" y1="444" x2="1036" y2="712.3" stroke="#e0605c" stroke-width="1.4"/>
<!-- sketch external geometry (pink dash-dot) -->
<g fill="none" stroke="#d42a72" stroke-width="2" stroke-dasharray="9 3 2 3">
<path d="M588.5 454.3 L848.4 604.5"/>
<path d="M848.4 604.5 L964.2 536.7"/>
<path d="M819.5 320.5 L906.3 370.2"/>
</g>
<!-- blue construction curve -->
<path d="M675.3 504.4 C740 523 800 540 839 549 C880 559 925 558 964.2 536.7" fill="none" stroke="#1e82ff" stroke-width="2" stroke-dasharray="8 4"/>
<!-- green sketch lines -->
<g fill="none" stroke="#12e612" stroke-width="2" stroke-linecap="round">
<path d="M906.3 370.2 L1079.5 470.5 L964.2 536.7"/>
<path d="M906.3 370.2 L984 465"/>
<path d="M984 465 C1000 484 1002 506 964.2 536.7"/>
</g>
<!-- yellow dimension constraints -->
<g fill="none" stroke="#f6ee00" stroke-width="2">
<path d="M800.3 310 L876.6 266.9"/>
<path d="M906.3 370.2 L981.7 327.5"/>
<path d="M847.5 284 L875.6 300"/>
<path d="M923 327.5 L951 343.6"/>
<path d="M1079.5 470.5 L1243.6 565.5"/>
<path d="M885.5 492 L1128 632.4"/>
<path d="M1099.3 614.7 L1145.7 589.5"/>
<path d="M1191.7 561.6 L1212.5 549.8"/>
<path d="M885.5 492 L1019.8 531.3"/>
</g>
<g fill="#f6ee00">
<path d="M847.5 284 L856.2 285.6 L853.4 290.6Z"/>
<path d="M951 343.6 L942.3 342 L945.1 337Z"/>
<path d="M1099.3 614.7 L1105 608.2 L1107.8 613.2Z"/>
<path d="M1212.5 549.8 L1206.8 556.3 L1204 551.3Z"/>
<path d="M987 521.6 L977.6 521.8 L979.2 516.4Z"/>
</g>
<g font-family="'Liberation Sans',sans-serif" fill="#f6ee00" font-size="14.5">
<text transform="matrix(0.905 0.425 -0.564 0.519 875.7 307.3)">11 mm</text>
<text transform="matrix(0.869 -0.494 0.553 0.569 1153.9 590.2)">12 mm</text>
<text transform="matrix(1.02 0.28 -0.371 0.594 1024.3 537.6)">R8 mm</text>
</g>
<!-- points -->
<g fill="#d42a72"><circle cx="588.5" cy="454.3" r="3.8"/><circle cx="819.6" cy="320.2" r="3.6"/><circle cx="848.4" cy="604.5" r="3.8"/></g>
<circle cx="568.4" cy="443.5" r="2.7" fill="#2a86ff"/>
<g fill="#12e612"><circle cx="675.3" cy="504.4" r="3.9"/><path d="M834.8 550.4 A4.2 4.2 0 0 1 843.4 550.4Z"/><circle cx="964.2" cy="536.7" r="3.8"/><circle cx="885.5" cy="492" r="3.2"/><circle cx="984" cy="465" r="3.4"/><circle cx="1079.5" cy="470.5" r="3.9"/><circle cx="906.3" cy="370.2" r="3.4"/></g>
<!-- red constraint symbols -->
<g fill="#ff2200" stroke="none" font-family="'Liberation Sans',sans-serif" font-weight="bold" font-size="14">
<rect x="881.6" y="346.8" width="1.8" height="10.2"/><text x="889.6" y="358.8">4</text>
<rect x="650.4" y="480.4" width="1.8" height="10"/><text x="658.8" y="492">4</text>
</g>
<g fill="#ff2200" font-family="'Liberation Serif',serif" font-weight="bold" font-size="16">
<text x="1020" y="512.2">15</text><rect x="1008.4" y="502.4" width="7.2" height="1.7"/><rect x="1008.4" y="505.8" width="7.2" height="1.7"/>
<text x="981.8" y="540.2">15</text><rect x="970.5" y="531" width="7.2" height="1.7"/><rect x="970.5" y="534.2" width="7.2" height="1.7"/>
</g>
<g fill="none" stroke="#ff2200" stroke-width="2" stroke-linecap="round">
<path d="M646.4 508 C645 500.4 650 496.2 658 496.4"/>
<path d="M967.8 545.4 L979.8 555.2" stroke-width="2.4"/><path d="M980 558.6 C972 557.6 967.4 562 968.8 570.2"/>
<path d="M990.6 454.6 L1002.8 462.4" stroke-width="2.2"/><path d="M995.4 453.8 L1001.6 458.6" stroke-width="1.6"/>
<path d="M839.4 538 L849.2 542.6" stroke-width="2.2"/><path d="M844.6 536.2 L848.4 540.8" stroke-width="1.6"/>
</g>
<!-- mouse cursor -->
<path d="M1318.5 404.5 L1318.5 421.5 L1322.4 417.8 L1325 424 L1327.6 422.9 L1325 416.8 L1330.4 416.8 Z" fill="#fff" stroke="#000" stroke-width="1"/>
<!-- watermark -->
<text x="562" y="366" font-family="'Liberation Sans',sans-serif" font-size="27.5" letter-spacing="0.5" fill="#acac40" fill-opacity="0.85">Mechnexus.com</text>

</svg>
</div>
</body>
</html>
